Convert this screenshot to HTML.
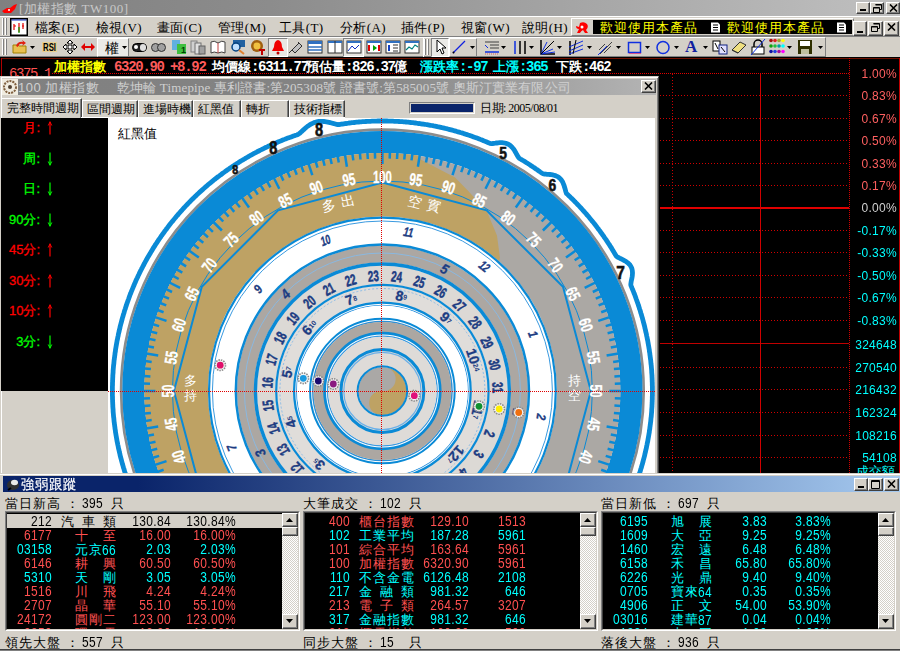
<!DOCTYPE html><html><head><meta charset="utf-8"><style>
*{margin:0;padding:0;box-sizing:border-box}
html,body{width:900px;height:651px;overflow:hidden;background:#d4d0c8;font-family:"Liberation Sans",sans-serif;font-size:12px;}
#root{position:relative;width:900px;height:651px;overflow:hidden}
.t{position:absolute;white-space:pre;line-height:1}
.m{font-family:"Liberation Mono",monospace}
.rb{border-top:1px solid #fff;border-left:1px solid #fff;border-right:1px solid #404040;border-bottom:1px solid #404040;box-shadow:inset -1px -1px 0 #808080;background:#d4d0c8}
.sk{border-top:1px solid #808080;border-left:1px solid #808080;border-right:1px solid #fff;border-bottom:1px solid #fff}
</style></head><body><div id="root"><div style="position:absolute;left:0px;top:0px;width:900px;height:16px;background:linear-gradient(to right,#808080 0%,#8c8c8c 30%,#c0c0c0 100%)"></div>
<svg style="position:absolute;left:1px;top:2px" width="17" height="13" viewBox="0 0 17 13"><path d="M1 9 L6 6 L9 6 L13 3 L16 2 L14 7 L10 11 L3 11 Z" fill="#ff0000"/><circle cx="8" cy="8" r="1" fill="#fff"/></svg>
<div class="t" style="left:19px;top:2px;color:#c8c8c8;font-size:13px;letter-spacing:0.5px;font-family:Liberation Serif,serif">[加權指數 TW100]</div>
<div class="rb" style="position:absolute;left:856px;top:2px;width:14px;height:12px"></div>
<div style="position:absolute;left:860px;top:9px;width:6px;height:2px;background:#000"></div>
<div class="rb" style="position:absolute;left:870px;top:2px;width:14px;height:12px"></div>
<svg style="position:absolute;left:873px;top:4px" width="9" height="9" viewBox="0 0 9 9"><path d="M2.5 0.5h6v5h-2M0.5 3.5h6v5h-6z M0.5 4h6 M2.5 1h6" fill="none" stroke="#000" stroke-width="1"/></svg>
<div class="rb" style="position:absolute;left:886px;top:2px;width:14px;height:12px"></div>
<svg style="position:absolute;left:889px;top:4px" width="9" height="8" viewBox="0 0 9 8"><path d="M1 0.5L8 7.5M8 0.5L1 7.5" stroke="#000" stroke-width="1.6"/></svg>
<div style="position:absolute;left:0px;top:16px;width:900px;height:21px;background:#d4d0c8;border-top:1px solid #fff;border-bottom:1px solid #808080"></div>
<div style="position:absolute;left:2px;top:18px;width:2px;height:17px;border-left:1px solid #fff;border-right:1px solid #808080"></div>
<div style="position:absolute;left:5px;top:18px;width:2px;height:17px;border-left:1px solid #fff;border-right:1px solid #808080"></div>
<svg style="position:absolute;left:10px;top:18px" width="18" height="18" viewBox="0 0 18 18"><rect x="0.75" y="0.75" width="16.5" height="16.5" fill="#fff" stroke="#000" stroke-width="1.5"/><rect x="1.5" y="1.5" width="15" height="1" fill="#1030c0"/><path d="M4 6v6M4 8h2M9 5v9M13 5v6M12 8h2" stroke="#e00000" stroke-width="1.2"/><path d="M9 9v6" stroke="#00a000" stroke-width="1.2"/></svg>
<div class="t" style="left:35px;top:21px;color:#000;font-size:13px;font-family:Liberation Serif,serif;letter-spacing:0.4px">檔案(E)</div>
<div class="t" style="left:96px;top:21px;color:#000;font-size:13px;font-family:Liberation Serif,serif;letter-spacing:0.4px">檢視(V)</div>
<div class="t" style="left:157px;top:21px;color:#000;font-size:13px;font-family:Liberation Serif,serif;letter-spacing:0.4px">畫面(C)</div>
<div class="t" style="left:218px;top:21px;color:#000;font-size:13px;font-family:Liberation Serif,serif;letter-spacing:0.4px">管理(M)</div>
<div class="t" style="left:279px;top:21px;color:#000;font-size:13px;font-family:Liberation Serif,serif;letter-spacing:0.4px">工具(T)</div>
<div class="t" style="left:340px;top:21px;color:#000;font-size:13px;font-family:Liberation Serif,serif;letter-spacing:0.4px">分析(A)</div>
<div class="t" style="left:401px;top:21px;color:#000;font-size:13px;font-family:Liberation Serif,serif;letter-spacing:0.4px">插件(P)</div>
<div class="t" style="left:461px;top:21px;color:#000;font-size:13px;font-family:Liberation Serif,serif;letter-spacing:0.4px">視窗(W)</div>
<div class="t" style="left:522px;top:21px;color:#000;font-size:13px;font-family:Liberation Serif,serif;letter-spacing:0.4px">說明(H)</div>
<div style="position:absolute;left:571px;top:18px;width:283px;height:18px;border-top:1px solid #fff;border-left:1px solid #fff;border-right:1px solid #808080;border-bottom:1px solid #808080"></div>
<svg style="position:absolute;left:575px;top:21px" width="15" height="13" viewBox="0 0 15 13"><path d="M5 2 Q9 0 12 3 Q14 6 11 9 L13 12 L10 12 L8 9 Q6 10 5 12 L2 12 L4 8 Q1 8 1 5 L4 6 Z" fill="#f00"/><circle cx="7" cy="6" r="1.5" fill="#fff"/></svg>
<div style="position:absolute;left:593px;top:20px;width:259px;height:14px;background:#000"></div>
<div class="t" style="left:600px;top:21px;color:#ffff00;font-size:13px;letter-spacing:1px">歡迎使用本產品</div>
<svg style="position:absolute;left:710px;top:22px" width="11" height="11" viewBox="0 0 11 11"><path d="M1 0.5h7l2 2v8h-9z" fill="#fff"/><path d="M3 3h5M3 5.5h5M3 8h5" stroke="#000" stroke-width="1"/></svg>
<div class="t" style="left:727px;top:21px;color:#ffff00;font-size:13px;letter-spacing:1px">歡迎使用本產品</div>
<svg style="position:absolute;left:836px;top:22px" width="11" height="11" viewBox="0 0 11 11"><path d="M1 0.5h7l2 2v8h-9z" fill="#fff"/><path d="M3 3h5M3 5.5h5M3 8h5" stroke="#000" stroke-width="1"/></svg>
<div class="rb" style="position:absolute;left:853px;top:21px;width:14px;height:15px"></div>
<div style="position:absolute;left:857px;top:31px;width:6px;height:2px;background:#000"></div>
<div class="rb" style="position:absolute;left:868px;top:21px;width:15px;height:15px"></div>
<svg style="position:absolute;left:871px;top:23px" width="9" height="9" viewBox="0 0 9 9"><path d="M2.5 0.5h6v5h-2M0.5 3.5h6v5h-6z M0.5 4h6 M2.5 1h6" fill="none" stroke="#000" stroke-width="1"/></svg>
<div class="rb" style="position:absolute;left:884px;top:21px;width:15px;height:15px"></div>
<svg style="position:absolute;left:887px;top:23px" width="9" height="8" viewBox="0 0 9 8"><path d="M1 0.5L8 7.5M8 0.5L1 7.5" stroke="#000" stroke-width="1.6"/></svg>
<div style="position:absolute;left:0px;top:37px;width:826px;height:20px;border-top:1px solid #fff;border-right:1px solid #808080;border-bottom:1px solid #808080"></div>
<div style="position:absolute;left:2px;top:39px;width:2px;height:16px;border-left:1px solid #fff;border-right:1px solid #808080"></div>
<div style="position:absolute;left:5px;top:39px;width:2px;height:16px;border-left:1px solid #fff;border-right:1px solid #808080"></div>
<svg style="position:absolute;left:12px;top:39px" width="16" height="16" viewBox="0 0 16 16"><path d="M1 6h5l1 1h7v7H1z" fill="#e8c050" stroke="#a08000"/><path d="M4 7 Q6 2 11 3 L10 1 L14 4 L10 7 L11 5 Q7 4 6 8z" fill="#e02010"/></svg>
<svg style="position:absolute;left:30px;top:46px" width="5" height="3" viewBox="0 0 5 3"><path d="M0 0h5L2.5 3z" fill="#000"/></svg>
<svg style="position:absolute;left:42px;top:39px" width="16" height="16" viewBox="0 0 16 16"><rect x="0" y="3" width="15" height="10" fill="#e8d090"/><text x="7.5" y="12" font-size="10" font-family="Liberation Sans" font-weight="bold" text-anchor="middle" fill="#000" textLength="13" lengthAdjust="spacingAndGlyphs">RSI</text></svg>
<svg style="position:absolute;left:62px;top:39px" width="16" height="16" viewBox="0 0 16 16"><path d="M8 1l3 3H9v3h3V5l3 3-3 3V9H9v3h2l-3 3-3-3h2V9H4v2L1 8l3-3v2h3V4H5z" fill="#fff" stroke="#000"/></svg>
<div style="position:absolute;left:80px;top:39px;width:16px;height:17px;background:#cfcbc7"></div>
<svg style="position:absolute;left:80px;top:39px" width="16" height="16" viewBox="0 0 16 16"><path d="M1 8l4-4v3h6V4l4 4-4 4V9H5v3z" fill="#e00000"/></svg>
<div style="position:absolute;left:97px;top:38px;width:32px;height:19px;background:#ebeae7;border-left:1px solid #fff;border-top:1px solid #fff;border-right:1px solid #808080;border-bottom:1px solid #808080"></div>
<div class="t" style="left:105px;top:41px;color:#000;font-size:14px">權</div>
<svg style="position:absolute;left:122px;top:46px" width="5" height="3" viewBox="0 0 5 3"><path d="M0 0h5L2.5 3z" fill="#000"/></svg>
<svg style="position:absolute;left:132px;top:39px" width="16" height="16" viewBox="0 0 16 16"><rect x="0.5" y="4.5" width="14" height="8" rx="4" fill="#202020" stroke="#000"/><rect x="8" y="5" width="6" height="7" rx="3" fill="#e0e0e0"/><circle cx="4" cy="8" r="2" fill="#fff"/></svg>
<svg style="position:absolute;left:151px;top:39px" width="16" height="16" viewBox="0 0 16 16"><circle cx="4.5" cy="8.5" r="4" fill="#a0a0a0" stroke="#303030"/><circle cx="10.5" cy="8.5" r="4" fill="#a0a0a0" stroke="#303030"/></svg>
<svg style="position:absolute;left:171px;top:39px" width="16" height="16" viewBox="0 0 16 16"><rect x="1" y="1" width="8" height="10" fill="#60b0e0"/><rect x="6" y="5" width="9" height="10" fill="#40c040"/><text x="10" y="14" font-size="9" font-weight="bold" fill="#004000" font-family="Liberation Sans">1</text></svg>
<svg style="position:absolute;left:190px;top:39px" width="16" height="16" viewBox="0 0 16 16"><rect x="1" y="2" width="6" height="11" fill="#d0d0d0" stroke="#808080"/><rect x="5" y="4" width="6" height="11" fill="#e0e0e0" stroke="#707070"/><rect x="9" y="7" width="6" height="8" fill="#a0a0a0" stroke="#606060"/></svg>
<svg style="position:absolute;left:210px;top:39px" width="16" height="16" viewBox="0 0 16 16"><path d="M1 3 Q4 1 8 4 Q12 1 15 3 V14 Q12 12 8 14 Q4 12 1 14z" fill="#fff" stroke="#404040"/><path d="M8 4v10" stroke="#c04040"/></svg>
<svg style="position:absolute;left:230px;top:39px" width="16" height="16" viewBox="0 0 16 16"><rect x="3" y="1" width="12" height="7" fill="#2060a0"/><circle cx="6" cy="8" r="4" fill="#c0e0ff" stroke="#004080" stroke-width="1.5"/><path d="M9 11l5 4" stroke="#e08030" stroke-width="2"/></svg>
<svg style="position:absolute;left:250px;top:39px" width="16" height="16" viewBox="0 0 16 16"><circle cx="7" cy="7" r="6" fill="#a06010"/><circle cx="7" cy="7" r="3.5" fill="#f0c040"/><path d="M9 11h6M12 11v5" stroke="#c00000" stroke-width="2"/></svg>
<div style="position:absolute;left:268px;top:38px;width:20px;height:19px;background:#e8e6e2;border-left:1px solid #808080;border-top:1px solid #808080;border-right:1px solid #fff;border-bottom:1px solid #fff"></div>
<svg style="position:absolute;left:270px;top:39px" width="16" height="16" viewBox="0 0 16 16"><path d="M8 1 Q12 2 12 8 L14 12 H2 L4 8 Q4 2 8 1z" fill="#f00000"/><circle cx="8" cy="14" r="1.5" fill="#c00000"/></svg>
<svg style="position:absolute;left:287px;top:39px" width="16" height="16" viewBox="0 0 16 16"><path d="M2 14l3-3M5 11l7-7 3 3-7 7z M11 3l2 2" fill="#c0c0c0" stroke="#303030"/></svg>
<svg style="position:absolute;left:307px;top:39px" width="16" height="16" viewBox="0 0 16 16"><rect x="1" y="2" width="14" height="12" fill="#fff" stroke="#303030"/><rect x="1" y="2" width="14" height="3" fill="#3070c0"/><path d="M1 8h14M1 11h14" stroke="#3070c0" stroke-width="1.5"/></svg>
<svg style="position:absolute;left:327px;top:39px" width="16" height="16" viewBox="0 0 16 16"><rect x="1" y="2" width="14" height="12" fill="#fff" stroke="#303030"/><rect x="1" y="2" width="14" height="2" fill="#3070c0"/><path d="M8 2v12" stroke="#303030"/></svg>
<div style="position:absolute;left:343px;top:38px;width:21px;height:19px;background:#e8e6e2;border-left:1px solid #808080;border-top:1px solid #808080;border-right:1px solid #fff;border-bottom:1px solid #fff"></div>
<svg style="position:absolute;left:346px;top:39px" width="16" height="16" viewBox="0 0 16 16"><rect x="1" y="2" width="14" height="12" fill="#fff" stroke="#303030"/><rect x="1" y="2" width="14" height="2" fill="#3070c0"/><path d="M2 12l4-5 3 3 4-4" stroke="#1030c0" fill="none"/></svg>
<svg style="position:absolute;left:366px;top:39px" width="16" height="16" viewBox="0 0 16 16"><rect x="1" y="2" width="14" height="12" fill="#fff" stroke="#303030"/><rect x="1" y="2" width="14" height="2" fill="#3070c0"/><path d="M3 6v6M13 6v6" stroke="#e00000" stroke-width="2"/><path d="M7 6l4 3-4 3z" fill="#00a000"/></svg>
<svg style="position:absolute;left:385px;top:39px" width="16" height="16" viewBox="0 0 16 16"><rect x="1" y="2" width="14" height="12" fill="#fff" stroke="#303030"/><rect x="1" y="2" width="14" height="2" fill="#3070c0"/><path d="M4 6v6" stroke="#1040c0" stroke-width="2"/><path d="M8 6h5M8 9h5M8 12h5" stroke="#303030"/></svg>
<svg style="position:absolute;left:404px;top:39px" width="16" height="16" viewBox="0 0 16 16"><rect x="1" y="2" width="14" height="12" fill="#fff" stroke="#303030"/><rect x="1" y="2" width="14" height="2" fill="#3070c0"/><path d="M2 11l3-3 3 2 3-4 3 2" stroke="#008080" fill="none" stroke-width="1.2"/></svg>
<div style="position:absolute;left:423px;top:37px;width:403px;height:20px;border-left:1px solid #fff"></div>
<div style="position:absolute;left:424px;top:39px;width:2px;height:16px;border-left:1px solid #fff;border-right:1px solid #808080"></div>
<div style="position:absolute;left:427px;top:39px;width:2px;height:16px;border-left:1px solid #fff;border-right:1px solid #808080"></div>
<div style="position:absolute;left:431px;top:38px;width:18px;height:19px;background:#ebeae7;border-left:1px solid #808080;border-top:1px solid #808080;border-right:1px solid #fff;border-bottom:1px solid #fff"></div>
<svg style="position:absolute;left:434px;top:39px" width="16" height="16" viewBox="0 0 16 16"><path d="M3 1v12l3-3 2 5 2-1-2-5h4z" fill="#fff" stroke="#000"/></svg>
<div style="position:absolute;left:449px;top:38px;width:28px;height:19px;border-left:1px solid #fff;border-top:1px solid #fff;border-right:1px solid #808080;border-bottom:1px solid #808080"></div>
<svg style="position:absolute;left:451px;top:39px" width="16" height="16" viewBox="0 0 16 16"><path d="M2 14L14 2" stroke="#1020e0" stroke-width="1.2"/><circle cx="2.5" cy="13.5" r="1" fill="#000"/></svg>
<svg style="position:absolute;left:470px;top:46px" width="5" height="3" viewBox="0 0 5 3"><path d="M0 0h5L2.5 3z" fill="#000"/></svg>
<svg style="position:absolute;left:484px;top:39px" width="16" height="16" viewBox="0 0 16 16"><path d="M1 3h14M6 6h9M6 9h9" stroke="#404040"/><path d="M1 6l3 3" stroke="#1030e0"/><path d="M1 13h14" stroke="#1030e0" stroke-width="1.5"/><path d="M1 15h14" stroke="#e04040" stroke-width="0.8" stroke-dasharray="1 1"/></svg>
<svg style="position:absolute;left:501px;top:46px" width="5" height="3" viewBox="0 0 5 3"><path d="M0 0h5L2.5 3z" fill="#000"/></svg>
<svg style="position:absolute;left:512px;top:39px" width="16" height="16" viewBox="0 0 16 16"><path d="M3 2v13" stroke="#1030e0" stroke-width="1.5"/><path d="M8 2v13M13 2v13" stroke="#000" stroke-width="1.5"/></svg>
<svg style="position:absolute;left:529px;top:46px" width="5" height="3" viewBox="0 0 5 3"><path d="M0 0h5L2.5 3z" fill="#000"/></svg>
<svg style="position:absolute;left:540px;top:39px" width="16" height="16" viewBox="0 0 16 16"><path d="M1 1v14h14" stroke="#000" stroke-width="1.5" fill="none"/><path d="M1 15L7 3M1 15L10 6M1 15L13 10M1 15L15 13" stroke="#1030e0"/><path d="M1 15L14 2" stroke="#000"/></svg>
<svg style="position:absolute;left:557px;top:46px" width="5" height="3" viewBox="0 0 5 3"><path d="M0 0h5L2.5 3z" fill="#000"/></svg>
<svg style="position:absolute;left:568px;top:39px" width="16" height="16" viewBox="0 0 16 16"><path d="M2 2v14" stroke="#000" stroke-width="1.5"/><path d="M1 8L15 2M1 12L15 6M1 15L15 10" stroke="#1030e0"/><path d="M8 1L5 15" stroke="#000"/></svg>
<svg style="position:absolute;left:587px;top:46px" width="5" height="3" viewBox="0 0 5 3"><path d="M0 0h5L2.5 3z" fill="#000"/></svg>
<svg style="position:absolute;left:597px;top:39px" width="16" height="16" viewBox="0 0 16 16"><path d="M3 15L15 3M5 13l7-7M7 14l7-7M2 11l6-6" stroke="#404040"/><path d="M1 16L10 7" stroke="#1030e0"/></svg>
<svg style="position:absolute;left:616px;top:46px" width="5" height="3" viewBox="0 0 5 3"><path d="M0 0h5L2.5 3z" fill="#000"/></svg>
<svg style="position:absolute;left:627px;top:39px" width="16" height="16" viewBox="0 0 16 16"><rect x="1.5" y="3.5" width="12" height="10" fill="none" stroke="#1030e0" stroke-width="1.5"/><path d="M2 14.5h12" stroke="#e04080" stroke-width="0.8"/></svg>
<svg style="position:absolute;left:645px;top:46px" width="5" height="3" viewBox="0 0 5 3"><path d="M0 0h5L2.5 3z" fill="#000"/></svg>
<svg style="position:absolute;left:655px;top:39px" width="16" height="16" viewBox="0 0 16 16"><circle cx="8" cy="8.5" r="6" fill="none" stroke="#1030e0" stroke-width="1.5"/></svg>
<svg style="position:absolute;left:674px;top:46px" width="5" height="3" viewBox="0 0 5 3"><path d="M0 0h5L2.5 3z" fill="#000"/></svg>
<div class="t" style="left:685px;top:38px;color:#1020a0;font-size:17px;font-weight:bold;font-family:Liberation Serif,serif">A</div>
<svg style="position:absolute;left:703px;top:46px" width="5" height="3" viewBox="0 0 5 3"><path d="M0 0h5L2.5 3z" fill="#000"/></svg>
<svg style="position:absolute;left:712px;top:39px" width="16" height="16" viewBox="0 0 16 16"><rect x="1" y="2" width="7" height="10" fill="#fff" stroke="#000"/><rect x="7" y="6" width="8" height="9" fill="#e0e0ff" stroke="#102080"/><path d="M3 4l3 6M9 8l4 5" stroke="#000"/></svg>
<svg style="position:absolute;left:731px;top:39px" width="16" height="16" viewBox="0 0 16 16"><path d="M1 11l8-8 6 3-8 8z" fill="#f0e080" stroke="#303030"/><path d="M1 11l6 3" stroke="#303030"/></svg>
<svg style="position:absolute;left:750px;top:39px" width="16" height="16" viewBox="0 0 16 16"><path d="M4 8V5a4 4 0 0 1 8 0v3" fill="none" stroke="#000" stroke-width="1.5"/><rect x="2" y="8" width="12" height="7" fill="#fff" stroke="#000"/><path d="M1 16L15 0" stroke="#1030e0"/></svg>
<svg style="position:absolute;left:769px;top:38px" width="16" height="17" viewBox="0 0 16 17"><circle cx="2" cy="2.5" r="1.8" fill="#a01010"/><circle cx="6" cy="2.5" r="1.8" fill="#e02020"/><circle cx="10" cy="2.5" r="1.8" fill="#a0a030"/><circle cx="14" cy="2.5" r="1.8" fill="#ffff00"/><circle cx="2" cy="8.0" r="1.8" fill="#10a010"/><circle cx="6" cy="8.0" r="1.8" fill="#20c040"/><circle cx="10" cy="8.0" r="1.8" fill="#00a0a0"/><circle cx="14" cy="8.0" r="1.8" fill="#00ffff"/><circle cx="2" cy="13.5" r="1.8" fill="#1010a0"/><circle cx="6" cy="13.5" r="1.8" fill="#2040e0"/><circle cx="10" cy="13.5" r="1.8" fill="#a010a0"/><circle cx="14" cy="13.5" r="1.8" fill="#ff00ff"/></svg>
<svg style="position:absolute;left:787px;top:46px" width="5" height="3" viewBox="0 0 5 3"><path d="M0 0h5L2.5 3z" fill="#000"/></svg>
<svg style="position:absolute;left:797px;top:39px" width="16" height="16" viewBox="0 0 16 16"><rect x="1" y="1" width="14" height="14" fill="#303000"/><rect x="3" y="2" width="10" height="5" fill="#fff"/><rect x="4" y="10" width="8" height="5" fill="#c0c0a0"/></svg>
<svg style="position:absolute;left:818px;top:46px" width="5" height="3" viewBox="0 0 5 3"><path d="M0 0h5L2.5 3z" fill="#000"/></svg>
<div style="position:absolute;left:0px;top:57px;width:900px;height:416px;background:#000"></div>
<div style="position:absolute;left:1px;top:58px;width:899px;height:1px;background:#701000"></div>
<div style="position:absolute;left:1px;top:58px;width:1px;height:415px;background:#b00000"></div>
<div style="position:absolute;left:899px;top:58px;width:1px;height:415px;background:#c00000"></div>
<div class="t" style="left:9px;top:67px;color:#ff5050;font-size:14px;font-family:Liberation Mono,monospace;letter-spacing:-1.4px">6375.1</div>
<div class="t" style="left:54px;top:60px;color:#ffff00;font-size:13px;font-weight:bold">加權指數</div>
<div class="t" style="left:114px;top:60px;color:#ff5a5a;font-size:14px;font-family:Liberation Mono,monospace;letter-spacing:-1.3px;font-weight:bold">6320.90</div>
<div class="t" style="left:170px;top:60px;color:#ff5a5a;font-size:14px;font-family:Liberation Mono,monospace;letter-spacing:-1.3px;font-weight:bold">+8.92</div>
<div class="t" style="left:212px;top:60px;color:#fff;font-size:13px;font-weight:bold">均價線</div>
<div class="t" style="left:251px;top:60px;color:#fff;font-size:14px;font-family:Liberation Mono,monospace;letter-spacing:-1.3px;font-weight:bold">:6311.77</div>
<div class="t" style="left:306px;top:60px;color:#fff;font-size:13px;font-weight:bold">預估量</div>
<div class="t" style="left:345px;top:60px;color:#fff;font-size:14px;font-family:Liberation Mono,monospace;letter-spacing:-1.3px;font-weight:bold">:826.37</div>
<div class="t" style="left:394px;top:60px;color:#fff;font-size:13px;font-weight:bold">億</div>
<div class="t" style="left:420px;top:60px;color:#00ffff;font-size:13px;font-weight:bold">漲跌率</div>
<div class="t" style="left:459px;top:60px;color:#00ffff;font-size:14px;font-family:Liberation Mono,monospace;letter-spacing:-1.3px;font-weight:bold">:-97</div>
<div class="t" style="left:493px;top:60px;color:#00ffff;font-size:13px;font-weight:bold">上漲</div>
<div class="t" style="left:519px;top:60px;color:#00ffff;font-size:14px;font-family:Liberation Mono,monospace;letter-spacing:-1.3px;font-weight:bold">:365</div>
<div class="t" style="left:556px;top:60px;color:#fff;font-size:13px;font-weight:bold">下跌</div>
<div class="t" style="left:582px;top:60px;color:#fff;font-size:14px;font-family:Liberation Mono,monospace;letter-spacing:-1.3px;font-weight:bold">:462</div>
<div style="position:absolute;left:52px;top:73px;width:797px;height:1px;background:repeating-linear-gradient(to right,#e00000 0 1px,transparent 1px 2px)"></div>
<div style="position:absolute;left:660px;top:95px;width:189px;height:1px;background:repeating-linear-gradient(to right,#d00000 0 1px,transparent 1px 3px)"></div>
<div style="position:absolute;left:660px;top:118px;width:189px;height:1px;background:repeating-linear-gradient(to right,#d00000 0 1px,transparent 1px 3px)"></div>
<div style="position:absolute;left:660px;top:140px;width:189px;height:1px;background:repeating-linear-gradient(to right,#d00000 0 1px,transparent 1px 3px)"></div>
<div style="position:absolute;left:660px;top:163px;width:189px;height:1px;background:repeating-linear-gradient(to right,#d00000 0 1px,transparent 1px 3px)"></div>
<div style="position:absolute;left:660px;top:185px;width:189px;height:1px;background:repeating-linear-gradient(to right,#d00000 0 1px,transparent 1px 3px)"></div>
<div style="position:absolute;left:660px;top:230px;width:189px;height:1px;background:repeating-linear-gradient(to right,#d00000 0 1px,transparent 1px 3px)"></div>
<div style="position:absolute;left:660px;top:252px;width:189px;height:1px;background:repeating-linear-gradient(to right,#d00000 0 1px,transparent 1px 3px)"></div>
<div style="position:absolute;left:660px;top:275px;width:189px;height:1px;background:repeating-linear-gradient(to right,#d00000 0 1px,transparent 1px 3px)"></div>
<div style="position:absolute;left:660px;top:297px;width:189px;height:1px;background:repeating-linear-gradient(to right,#d00000 0 1px,transparent 1px 3px)"></div>
<div style="position:absolute;left:660px;top:320px;width:189px;height:1px;background:repeating-linear-gradient(to right,#d00000 0 1px,transparent 1px 3px)"></div>
<div style="position:absolute;left:660px;top:367px;width:189px;height:1px;background:repeating-linear-gradient(to right,#d00000 0 1px,transparent 1px 3px)"></div>
<div style="position:absolute;left:660px;top:389px;width:189px;height:1px;background:repeating-linear-gradient(to right,#d00000 0 1px,transparent 1px 3px)"></div>
<div style="position:absolute;left:660px;top:412px;width:189px;height:1px;background:repeating-linear-gradient(to right,#d00000 0 1px,transparent 1px 3px)"></div>
<div style="position:absolute;left:660px;top:435px;width:189px;height:1px;background:repeating-linear-gradient(to right,#d00000 0 1px,transparent 1px 3px)"></div>
<div style="position:absolute;left:660px;top:457px;width:189px;height:1px;background:repeating-linear-gradient(to right,#d00000 0 1px,transparent 1px 3px)"></div>
<div style="position:absolute;left:660px;top:207px;width:189px;height:2px;background:#e00000"></div>
<div style="position:absolute;left:660px;top:343px;width:189px;height:1px;background:#c00000"></div>
<div style="position:absolute;left:672px;top:74px;width:1px;height:399px;background:repeating-linear-gradient(to bottom,#d00000 0 1px,transparent 1px 3px)"></div>
<div style="position:absolute;left:760px;top:74px;width:1px;height:399px;background:#d00000"></div>
<div style="position:absolute;left:849px;top:58px;width:1px;height:415px;background:repeating-linear-gradient(to bottom,#d00000 0 1px,transparent 1px 2px)"></div>
<div class="t" style="right:3px;top:68px;color:#ff6060;font-size:12px;font-family:Liberation Sans,sans-serif;letter-spacing:0.3px;transform:scaleY(1.05)">1.00%</div>
<div class="t" style="right:3px;top:90px;color:#ff6060;font-size:12px;font-family:Liberation Sans,sans-serif;letter-spacing:0.3px;transform:scaleY(1.05)">0.83%</div>
<div class="t" style="right:3px;top:113px;color:#ff6060;font-size:12px;font-family:Liberation Sans,sans-serif;letter-spacing:0.3px;transform:scaleY(1.05)">0.67%</div>
<div class="t" style="right:3px;top:135px;color:#ff6060;font-size:12px;font-family:Liberation Sans,sans-serif;letter-spacing:0.3px;transform:scaleY(1.05)">0.50%</div>
<div class="t" style="right:3px;top:158px;color:#ff6060;font-size:12px;font-family:Liberation Sans,sans-serif;letter-spacing:0.3px;transform:scaleY(1.05)">0.33%</div>
<div class="t" style="right:3px;top:180px;color:#ff6060;font-size:12px;font-family:Liberation Sans,sans-serif;letter-spacing:0.3px;transform:scaleY(1.05)">0.17%</div>
<div class="t" style="right:3px;top:202px;color:#d0d0d0;font-size:12px;font-family:Liberation Sans,sans-serif;letter-spacing:0.3px;transform:scaleY(1.05)">0.00%</div>
<div class="t" style="right:3px;top:225px;color:#00ffff;font-size:12px;font-family:Liberation Sans,sans-serif;letter-spacing:0.3px;transform:scaleY(1.05)">-0.17%</div>
<div class="t" style="right:3px;top:247px;color:#00ffff;font-size:12px;font-family:Liberation Sans,sans-serif;letter-spacing:0.3px;transform:scaleY(1.05)">-0.33%</div>
<div class="t" style="right:3px;top:270px;color:#00ffff;font-size:12px;font-family:Liberation Sans,sans-serif;letter-spacing:0.3px;transform:scaleY(1.05)">-0.50%</div>
<div class="t" style="right:3px;top:292px;color:#00ffff;font-size:12px;font-family:Liberation Sans,sans-serif;letter-spacing:0.3px;transform:scaleY(1.05)">-0.67%</div>
<div class="t" style="right:3px;top:315px;color:#00ffff;font-size:12px;font-family:Liberation Sans,sans-serif;letter-spacing:0.3px;transform:scaleY(1.05)">-0.83%</div>
<div class="t" style="right:3px;top:339px;color:#00ffff;font-size:12px;font-family:Liberation Sans,sans-serif;letter-spacing:0.3px;transform:scaleY(1.05)">324648</div>
<div class="t" style="right:3px;top:362px;color:#00ffff;font-size:12px;font-family:Liberation Sans,sans-serif;letter-spacing:0.3px;transform:scaleY(1.05)">270540</div>
<div class="t" style="right:3px;top:384px;color:#00ffff;font-size:12px;font-family:Liberation Sans,sans-serif;letter-spacing:0.3px;transform:scaleY(1.05)">216432</div>
<div class="t" style="right:3px;top:407px;color:#00ffff;font-size:12px;font-family:Liberation Sans,sans-serif;letter-spacing:0.3px;transform:scaleY(1.05)">162324</div>
<div class="t" style="right:3px;top:430px;color:#00ffff;font-size:12px;font-family:Liberation Sans,sans-serif;letter-spacing:0.3px;transform:scaleY(1.05)">108216</div>
<div class="t" style="right:3px;top:452px;color:#00ffff;font-size:12px;font-family:Liberation Sans,sans-serif;letter-spacing:0.3px;transform:scaleY(1.05)">54108</div>
<div class="t" style="left:856px;top:466px;color:#00ffff;font-size:12.5px">成交額</div>
<div style="position:absolute;left:0px;top:76px;width:659px;height:397px;background:#d4d0c8;border-top:1px solid #d4d0c8;border-left:1px solid #d4d0c8;border-right:1px solid #404040;box-shadow:inset 1px 1px 0 #fff,inset -1px 0 0 #808080"></div>
<div style="position:absolute;left:2px;top:79px;width:654px;height:16px;background:linear-gradient(to right,#808080 0%,#848484 55%,#b4b4b4 100%)"></div>
<svg style="position:absolute;left:2px;top:79px" width="16" height="16" viewBox="0 0 16 16"><rect width="16" height="16" fill="#f0ece0"/><circle cx="8" cy="8" r="6" fill="none" stroke="#806040" stroke-width="2" stroke-dasharray="2 1"/><circle cx="8" cy="8" r="2" fill="#504030"/></svg>
<div class="t" style="left:18px;top:81px;color:#d0d0d0;font-size:13px;letter-spacing:0.5px">100 加權指數</div>
<div class="t" style="left:117px;top:81px;color:#d0d0d0;font-size:13px;font-family:Liberation Serif,serif;letter-spacing:0.15px">乾坤輪 Timepipe 專利證書:第205308號 證書號:第585005號 奧斯汀實業有限公司</div>
<div class="rb" style="position:absolute;left:641px;top:80px;width:15px;height:13px"></div>
<svg style="position:absolute;left:644px;top:82px" width="9" height="8" viewBox="0 0 9 8"><path d="M1 0.5L8 7.5M8 0.5L1 7.5" stroke="#000" stroke-width="1.6"/></svg>
<div style="position:absolute;left:1px;top:98px;width:81px;height:20px;background:#d4d0c8;border-top:1px solid #fff;border-left:1px solid #fff;border-right:1px solid #404040;box-shadow:inset -1px 0 0 #808080"></div>
<div class="t" style="left:7px;top:102px;color:#000;font-size:12px">完整時間週期</div>
<div style="position:absolute;left:82px;top:100px;width:56px;height:17px;background:#d4d0c8;border-top:1px solid #fff;border-left:1px solid #fff;border-right:1px solid #404040;box-shadow:inset -1px 0 0 #808080"></div>
<div class="t" style="left:87px;top:103px;color:#000;font-size:12px">區間週期</div>
<div style="position:absolute;left:138px;top:100px;width:55px;height:17px;background:#d4d0c8;border-top:1px solid #fff;border-left:1px solid #fff;border-right:1px solid #404040;box-shadow:inset -1px 0 0 #808080"></div>
<div class="t" style="left:143px;top:103px;color:#000;font-size:12px">進場時機</div>
<div style="position:absolute;left:193px;top:100px;width:48px;height:17px;background:#d4d0c8;border-top:1px solid #fff;border-left:1px solid #fff;border-right:1px solid #404040;box-shadow:inset -1px 0 0 #808080"></div>
<div class="t" style="left:198px;top:103px;color:#000;font-size:12px">紅黑值</div>
<div style="position:absolute;left:241px;top:100px;width:48px;height:17px;background:#d4d0c8;border-top:1px solid #fff;border-left:1px solid #fff;border-right:1px solid #404040;box-shadow:inset -1px 0 0 #808080"></div>
<div class="t" style="left:246px;top:103px;color:#000;font-size:12px">轉折</div>
<div style="position:absolute;left:289px;top:100px;width:56px;height:17px;background:#d4d0c8;border-top:1px solid #fff;border-left:1px solid #fff;border-right:1px solid #404040;box-shadow:inset -1px 0 0 #808080"></div>
<div class="t" style="left:294px;top:103px;color:#000;font-size:12px">技術指標</div>
<div style="position:absolute;left:81px;top:117px;width:264px;height:1px;background:#fff"></div>
<div style="position:absolute;left:409px;top:102px;width:66px;height:12px;border-top:1px solid #808080;border-left:1px solid #808080;border-right:1px solid #fff;border-bottom:1px solid #fff"></div>
<div style="position:absolute;left:411px;top:104px;width:62px;height:8px;background:#0a246a"></div>
<div class="t" style="left:480px;top:102px;color:#000;font-size:12px;font-family:Liberation Serif,serif;letter-spacing:-0.5px">日期: 2005/08/01</div>
<div style="position:absolute;left:1px;top:118px;width:107px;height:273px;background:#000"></div>
<div class="t" style="right:860px;top:121.0px;color:#ff0000;font-size:13px;-webkit-text-stroke:0.3px #ff0000">月:</div>
<svg style="position:absolute;left:47px;top:121.0px" width="6" height="14" viewBox="0 0 6 14"><path d="M3 0.5V13.5" stroke="#ff0000" stroke-width="1.2"/><path d="M3 1L1.2 4.5M3 1L4.8 4.5" stroke="#ff0000" stroke-width="1"/></svg>
<div class="t" style="right:860px;top:151.5px;color:#00ff00;font-size:13px;-webkit-text-stroke:0.3px #00ff00">周:</div>
<svg style="position:absolute;left:47px;top:151.5px" width="6" height="14" viewBox="0 0 6 14"><path d="M3 0.5V13.5" stroke="#00ff00" stroke-width="1.2"/><path d="M3 13L1.2 9.5M3 13L4.8 9.5" stroke="#00ff00" stroke-width="1"/></svg>
<div class="t" style="right:860px;top:182.0px;color:#00ff00;font-size:13px;-webkit-text-stroke:0.3px #00ff00">日:</div>
<svg style="position:absolute;left:47px;top:182.0px" width="6" height="14" viewBox="0 0 6 14"><path d="M3 0.5V13.5" stroke="#00ff00" stroke-width="1.2"/><path d="M3 13L1.2 9.5M3 13L4.8 9.5" stroke="#00ff00" stroke-width="1"/></svg>
<div class="t" style="right:860px;top:212.5px;color:#00ff00;font-size:13px;-webkit-text-stroke:0.3px #00ff00">90分:</div>
<svg style="position:absolute;left:47px;top:212.5px" width="6" height="14" viewBox="0 0 6 14"><path d="M3 0.5V13.5" stroke="#00ff00" stroke-width="1.2"/><path d="M3 13L1.2 9.5M3 13L4.8 9.5" stroke="#00ff00" stroke-width="1"/></svg>
<div class="t" style="right:860px;top:243.0px;color:#ff0000;font-size:13px;-webkit-text-stroke:0.3px #ff0000">45分:</div>
<svg style="position:absolute;left:47px;top:243.0px" width="6" height="14" viewBox="0 0 6 14"><path d="M3 0.5V13.5" stroke="#ff0000" stroke-width="1.2"/><path d="M3 1L1.2 4.5M3 1L4.8 4.5" stroke="#ff0000" stroke-width="1"/></svg>
<div class="t" style="right:860px;top:273.5px;color:#ff0000;font-size:13px;-webkit-text-stroke:0.3px #ff0000">30分:</div>
<svg style="position:absolute;left:47px;top:273.5px" width="6" height="14" viewBox="0 0 6 14"><path d="M3 0.5V13.5" stroke="#ff0000" stroke-width="1.2"/><path d="M3 1L1.2 4.5M3 1L4.8 4.5" stroke="#ff0000" stroke-width="1"/></svg>
<div class="t" style="right:860px;top:304.0px;color:#ff0000;font-size:13px;-webkit-text-stroke:0.3px #ff0000">10分:</div>
<svg style="position:absolute;left:47px;top:304.0px" width="6" height="14" viewBox="0 0 6 14"><path d="M3 0.5V13.5" stroke="#ff0000" stroke-width="1.2"/><path d="M3 1L1.2 4.5M3 1L4.8 4.5" stroke="#ff0000" stroke-width="1"/></svg>
<div class="t" style="right:860px;top:334.5px;color:#00ff00;font-size:13px;-webkit-text-stroke:0.3px #00ff00">3分:</div>
<svg style="position:absolute;left:47px;top:334.5px" width="6" height="14" viewBox="0 0 6 14"><path d="M3 0.5V13.5" stroke="#00ff00" stroke-width="1.2"/><path d="M3 13L1.2 9.5M3 13L4.8 9.5" stroke="#00ff00" stroke-width="1"/></svg>
<div style="position:absolute;left:108px;top:118px;width:547px;height:355px;background:#fff;overflow:hidden"></div>
<svg style="position:absolute;left:0;top:0" width="900" height="651" viewBox="0 0 900 651"><defs><clipPath id="wc"><rect x="108" y="118" width="547" height="355"/></clipPath><mask id="ringmask"><rect x="0" y="0" width="900" height="651" fill="#000"/><circle cx="382.4" cy="391.0" r="206" fill="none" stroke="#fff" stroke-width="64"/></mask></defs><g clip-path="url(#wc)"><path d="M382.4,661.0 L381.2,661.0 L380.0,661.0 L378.9,661.0 L377.7,661.0 L376.5,660.9 L375.3,660.9 L374.2,660.9 L373.0,660.8 L371.8,660.8 L370.6,660.7 L369.4,660.7 L368.3,660.6 L367.1,660.6 L365.9,660.5 L364.7,660.4 L363.6,660.3 L362.4,660.3 L361.2,660.2 L360.0,660.1 L358.9,660.0 L357.7,659.9 L356.5,659.8 L355.3,659.6 L354.2,659.5 L353.0,659.4 L351.8,659.3 L350.7,659.1 L349.5,659.0 L348.3,658.8 L347.2,658.7 L346.0,658.5 L344.8,658.4 L343.7,658.2 L342.5,658.0 L341.3,657.9 L340.2,657.7 L339.0,657.5 L337.8,657.3 L336.7,657.1 L335.5,656.9 L334.4,656.7 L333.2,656.5 L332.0,656.3 L330.9,656.0 L329.7,655.8 L328.6,655.6 L327.4,655.3 L326.3,655.1 L325.1,654.9 L324.0,654.6 L322.8,654.3 L321.7,654.1 L320.5,653.8 L319.4,653.5 L318.2,653.3 L317.1,653.0 L315.9,652.7 L314.8,652.4 L313.7,652.1 L312.5,651.8 L311.4,651.5 L310.2,651.2 L309.1,650.9 L308.0,650.5 L306.8,650.2 L305.7,649.9 L304.6,649.5 L303.5,649.2 L302.3,648.9 L301.2,648.5 L300.1,648.1 L299.0,647.8 L297.8,647.4 L296.7,647.0 L295.6,646.7 L294.5,646.3 L293.4,645.9 L292.3,645.5 L291.2,645.1 L290.1,644.7 L288.9,644.3 L287.8,643.9 L286.7,643.5 L285.6,643.1 L284.5,642.6 L283.4,642.2 L282.3,641.8 L281.3,641.3 L280.2,640.9 L279.1,640.4 L278.0,640.0 L276.9,639.5 L275.8,639.1 L274.7,638.6 L273.7,638.1 L272.6,637.7 L271.5,637.2 L270.4,636.7 L269.4,636.2 L268.3,635.7 L267.2,635.2 L266.2,634.7 L265.1,634.2 L264.0,633.7 L263.0,633.2 L261.9,632.6 L260.9,632.1 L259.8,631.6 L258.8,631.0 L257.7,630.5 L256.7,629.9 L255.6,629.4 L254.6,628.8 L253.6,628.3 L252.5,627.7 L251.5,627.1 L250.5,626.6 L249.4,626.0 L248.4,625.4 L247.4,624.8 L246.4,624.2 L245.4,623.6 L244.4,623.0 L243.3,622.4 L242.3,621.8 L241.3,621.2 L240.3,620.6 L239.3,620.0 L238.3,619.3 L237.3,618.7 L236.3,618.1 L235.3,617.4 L234.4,616.8 L233.4,616.1 L232.4,615.5 L231.4,614.8 L230.4,614.2 L229.5,613.5 L228.5,612.8 L227.5,612.2 L226.6,611.5 L225.6,610.8 L224.7,610.1 L223.7,609.4 L222.7,608.7 L221.8,608.0 L220.9,607.3 L219.9,606.6 L219.0,605.9 L218.0,605.2 L217.1,604.5 L216.2,603.8 L215.2,603.0 L214.3,602.3 L213.4,601.6 L212.5,600.8 L211.6,600.1 L210.7,599.3 L209.8,598.6 L208.8,597.8 L207.9,597.1 L207.0,596.3 L206.2,595.5 L205.3,594.8 L204.4,594.0 L203.5,593.2 L202.6,592.4 L201.7,591.6 L200.9,590.9 L200.0,590.1 L199.1,589.3 L198.3,588.5 L197.4,587.7 L196.5,586.9 L195.7,586.0 L194.8,585.2 L194.0,584.4 L193.2,583.6 L192.3,582.8 L191.5,581.9 L190.6,581.1 L189.8,580.2 L189.0,579.4 L188.2,578.6 L187.4,577.7 L186.5,576.9 L185.7,576.0 L184.9,575.1 L184.1,574.3 L183.3,573.4 L182.5,572.5 L181.8,571.7 L181.0,570.8 L180.2,569.9 L179.4,569.0 L178.6,568.1 L177.9,567.2 L177.1,566.4 L176.3,565.5 L175.6,564.6 L174.8,563.6 L174.1,562.7 L173.3,561.8 L172.6,560.9 L171.8,560.0 L171.1,559.1 L170.4,558.2 L169.6,557.2 L168.9,556.3 L168.2,555.4 L167.5,554.4 L166.8,553.5 L166.1,552.5 L165.4,551.6 L164.7,550.7 L164.0,549.7 L163.3,548.7 L162.6,547.8 L161.9,546.8 L161.2,545.9 L160.6,544.9 L159.9,543.9 L159.2,543.0 L158.6,542.0 L157.9,541.0 L157.3,540.0 L156.6,539.0 L156.0,538.1 L155.3,537.1 L154.7,536.1 L154.1,535.1 L153.4,534.1 L152.8,533.1 L152.2,532.1 L151.6,531.1 L151.0,530.1 L150.4,529.0 L149.8,528.0 L149.2,527.0 L148.6,526.0 L148.0,525.0 L147.4,524.0 L146.8,522.9 L146.3,521.9 L145.7,520.9 L145.1,519.8 L144.6,518.8 L144.0,517.8 L143.5,516.7 L142.9,515.7 L142.4,514.6 L141.8,513.6 L141.3,512.5 L140.8,511.5 L140.2,510.4 L139.7,509.4 L139.2,508.3 L138.7,507.2 L138.2,506.2 L137.7,505.1 L137.2,504.0 L136.7,503.0 L136.2,501.9 L135.7,500.8 L135.3,499.7 L134.8,498.7 L134.3,497.6 L133.9,496.5 L133.4,495.4 L133.0,494.3 L132.5,493.2 L132.1,492.1 L131.6,491.1 L131.2,490.0 L130.8,488.9 L130.3,487.8 L129.9,486.7 L129.5,485.6 L129.1,484.5 L128.7,483.3 L128.3,482.2 L127.9,481.1 L127.5,480.0 L127.1,478.9 L126.7,477.8 L126.4,476.7 L126.0,475.6 L125.6,474.4 L125.3,473.3 L124.9,472.2 L124.5,471.1 L124.2,469.9 L123.9,468.8 L123.5,467.7 L123.2,466.6 L122.9,465.4 L122.5,464.3 L122.2,463.2 L121.9,462.0 L121.6,460.9 L121.3,459.7 L121.0,458.6 L120.7,457.5 L120.4,456.3 L120.1,455.2 L119.9,454.0 L119.6,452.9 L119.3,451.7 L119.1,450.6 L118.8,449.4 L118.5,448.3 L118.3,447.1 L118.1,446.0 L117.8,444.8 L117.6,443.7 L117.4,442.5 L117.1,441.4 L116.9,440.2 L116.7,439.0 L116.5,437.9 L116.3,436.7 L116.1,435.6 L115.9,434.4 L115.7,433.2 L115.5,432.1 L115.4,430.9 L115.2,429.7 L115.0,428.6 L114.9,427.4 L114.7,426.2 L114.6,425.1 L114.4,423.9 L114.3,422.7 L114.1,421.6 L114.0,420.4 L113.9,419.2 L113.8,418.1 L113.6,416.9 L113.5,415.7 L113.4,414.5 L113.3,413.4 L113.2,412.2 L113.1,411.0 L113.1,409.8 L113.0,408.7 L112.9,407.5 L112.8,406.3 L112.8,405.1 L112.7,404.0 L112.7,402.8 L112.6,401.6 L112.6,400.4 L112.5,399.2 L112.5,398.1 L112.5,396.9 L112.4,395.7 L112.4,394.5 L112.4,393.4 L112.4,392.2 L112.4,391.0 L112.4,389.8 L112.4,388.6 L112.4,387.5 L112.4,386.3 L112.5,385.1 L112.5,383.9 L112.5,382.8 L112.6,381.6 L112.6,380.4 L112.7,379.2 L112.7,378.0 L112.8,376.9 L112.8,375.7 L112.9,374.5 L113.0,373.3 L113.1,372.2 L113.1,371.0 L113.2,369.8 L113.3,368.6 L113.4,367.5 L113.5,366.3 L113.6,365.1 L113.8,363.9 L113.9,362.8 L114.0,361.6 L114.1,360.4 L114.3,359.3 L114.4,358.1 L114.6,356.9 L114.7,355.8 L114.9,354.6 L115.0,353.4 L115.2,352.3 L115.4,351.1 L115.5,349.9 L115.7,348.8 L115.9,347.6 L116.1,346.4 L116.3,345.3 L116.5,344.1 L116.7,343.0 L116.9,341.8 L117.1,340.6 L117.4,339.5 L117.6,338.3 L117.8,337.2 L118.1,336.0 L118.3,334.9 L118.5,333.7 L118.8,332.6 L119.1,331.4 L119.3,330.3 L119.6,329.1 L119.9,328.0 L120.1,326.8 L120.4,325.7 L120.7,324.5 L121.0,323.4 L121.3,322.3 L121.6,321.1 L121.9,320.0 L122.2,318.8 L122.5,317.7 L122.9,316.6 L123.2,315.4 L123.5,314.3 L123.9,313.2 L124.2,312.1 L124.5,310.9 L124.9,309.8 L125.3,308.7 L125.6,307.6 L126.0,306.4 L126.4,305.3 L126.7,304.2 L127.1,303.1 L127.5,302.0 L127.9,300.9 L128.3,299.8 L128.7,298.7 L129.1,297.5 L129.5,296.4 L129.9,295.3 L130.3,294.2 L130.8,293.1 L131.2,292.0 L131.6,290.9 L132.1,289.9 L132.5,288.8 L133.0,287.7 L133.4,286.6 L133.9,285.5 L134.3,284.4 L134.8,283.3 L135.3,282.3 L135.7,281.2 L136.2,280.1 L136.7,279.0 L137.2,278.0 L137.7,276.9 L138.2,275.8 L138.7,274.8 L139.2,273.7 L139.7,272.6 L140.2,271.6 L140.8,270.5 L141.3,269.5 L141.8,268.4 L142.4,267.4 L142.9,266.3 L143.5,265.3 L144.0,264.2 L144.6,263.2 L145.1,262.2 L145.7,261.1 L146.3,260.1 L146.8,259.1 L147.4,258.0 L148.0,257.0 L148.6,256.0 L149.2,255.0 L149.8,254.0 L150.4,253.0 L151.0,251.9 L151.6,250.9 L152.2,249.9 L152.8,248.9 L153.4,247.9 L154.1,246.9 L154.7,245.9 L155.3,244.9 L156.0,243.9 L156.6,243.0 L157.3,242.0 L157.9,241.0 L158.6,240.0 L159.2,239.0 L159.9,238.1 L160.6,237.1 L161.2,236.1 L161.9,235.2 L162.6,234.2 L163.3,233.3 L164.0,232.3 L164.7,231.3 L165.4,230.4 L166.1,229.5 L166.8,228.5 L167.5,227.6 L168.2,226.6 L168.9,225.7 L169.6,224.8 L170.4,223.8 L171.1,222.9 L171.8,222.0 L172.6,221.1 L173.3,220.2 L174.1,219.3 L174.8,218.4 L175.6,217.4 L176.3,216.5 L177.1,215.6 L177.9,214.8 L178.6,213.9 L179.4,213.0 L180.2,212.1 L181.0,211.2 L181.8,210.3 L182.5,209.5 L183.3,208.6 L184.1,207.7 L184.9,206.9 L185.7,206.0 L186.5,205.1 L187.4,204.3 L188.2,203.4 L189.0,202.6 L189.8,201.8 L190.6,200.9 L191.5,200.1 L192.3,199.2 L193.2,198.4 L194.0,197.6 L194.8,196.8 L195.7,196.0 L196.5,195.1 L197.4,194.3 L198.3,193.5 L199.1,192.7 L200.0,191.9 L200.9,191.1 L201.7,190.4 L202.6,189.6 L203.5,188.8 L204.4,188.0 L205.3,187.2 L206.2,186.5 L207.0,185.7 L207.9,184.9 L208.8,184.2 L209.8,183.4 L210.7,182.7 L211.6,181.9 L212.5,181.2 L213.4,180.4 L214.3,179.7 L215.2,179.0 L216.2,178.2 L217.1,177.5 L218.0,176.8 L219.0,176.1 L219.9,175.4 L220.9,174.7 L221.8,174.0 L222.7,173.3 L223.7,172.6 L224.7,171.9 L225.6,171.2 L226.6,170.5 L227.5,169.8 L228.5,169.2 L229.5,168.5 L230.4,167.8 L231.4,167.2 L232.4,166.5 L233.4,165.9 L234.4,165.2 L235.3,164.6 L236.3,163.9 L237.3,163.3 L238.3,162.7 L239.3,162.0 L240.3,161.4 L241.3,160.8 L242.3,160.2 L243.3,159.6 L244.4,159.0 L245.4,158.4 L246.4,157.8 L247.4,157.2 L248.4,156.6 L249.4,156.0 L250.5,155.4 L251.5,154.9 L252.5,154.3 L253.6,153.7 L254.6,153.2 L255.6,152.6 L256.7,152.1 L257.7,151.5 L258.8,151.0 L259.8,150.4 L260.9,149.9 L261.9,149.4 L263.0,148.8 L264.0,148.3 L265.1,147.8 L266.2,147.3 L267.2,146.8 L268.3,146.3 L269.4,145.8 L270.4,145.3 L271.5,144.8 L272.6,144.3 L273.7,143.9 L274.7,143.4 L275.8,142.9 L276.9,142.5 L278.0,142.0 L279.1,141.6 L280.2,141.1 L281.3,140.7 L282.3,140.2 L283.4,139.8 L284.5,139.4 L285.6,138.9 L286.7,138.5 L287.8,138.1 L288.9,137.7 L290.1,137.3 L291.2,136.9 L292.3,136.5 L293.4,136.1 L294.5,135.7 L295.6,135.3 L296.7,135.0 L297.8,134.6 L298.9,133.9 L299.9,133.1 L300.8,132.2 L301.8,131.4 L302.7,130.5 L303.7,129.6 L304.7,128.7 L305.7,127.8 L306.7,127.0 L307.7,126.2 L308.8,125.5 L309.8,124.8 L310.9,124.2 L312.0,123.6 L313.1,123.1 L314.2,122.6 L315.4,122.2 L316.6,121.9 L317.7,121.7 L318.9,121.5 L320.2,121.4 L321.4,121.4 L322.6,121.4 L323.9,121.5 L325.1,121.7 L326.4,121.9 L327.7,122.1 L329.0,122.4 L330.2,122.7 L331.5,123.0 L332.8,123.3 L334.1,123.7 L335.3,124.0 L336.6,124.3 L337.8,124.6 L339.0,124.5 L340.2,124.3 L341.3,124.1 L342.5,124.0 L343.7,123.8 L344.8,123.6 L346.0,123.5 L347.2,123.3 L348.3,123.2 L349.5,123.0 L350.7,122.9 L351.8,122.7 L353.0,122.6 L354.2,122.5 L355.3,122.4 L356.5,122.2 L357.7,122.1 L358.9,122.0 L360.0,121.9 L361.2,121.8 L362.4,121.7 L363.6,121.7 L364.7,121.6 L365.9,121.5 L367.1,121.4 L368.3,121.4 L369.4,121.3 L370.6,121.3 L371.8,121.2 L373.0,121.2 L374.2,121.1 L375.3,121.1 L376.5,121.1 L377.7,121.0 L378.9,121.0 L380.0,121.0 L381.2,121.0 L382.4,121.0 L383.6,121.0 L384.8,121.0 L385.9,121.0 L387.1,121.0 L388.3,121.1 L389.5,121.1 L390.6,121.1 L391.8,121.2 L393.0,121.2 L394.2,121.3 L395.4,121.3 L396.5,121.4 L397.7,121.4 L398.9,121.5 L400.1,121.6 L401.2,121.7 L402.4,121.7 L403.6,121.8 L404.8,121.9 L405.9,122.0 L407.1,122.1 L408.3,122.2 L409.5,122.4 L410.6,122.5 L411.8,122.6 L413.0,122.7 L414.1,122.9 L415.3,123.0 L416.5,123.2 L417.6,123.3 L418.8,123.5 L420.0,123.6 L421.1,123.8 L422.3,124.0 L423.5,124.1 L424.6,124.3 L425.8,124.5 L427.0,124.7 L428.1,124.9 L429.3,125.1 L430.4,125.3 L431.6,125.5 L432.8,125.7 L433.9,126.0 L435.1,126.2 L436.2,126.4 L437.4,126.7 L438.5,126.9 L439.7,127.1 L440.8,127.4 L442.0,127.7 L443.1,127.9 L444.3,128.2 L445.4,128.5 L446.6,128.7 L447.7,129.0 L448.9,129.3 L450.0,129.6 L451.1,129.9 L452.3,130.2 L453.4,130.5 L454.6,130.8 L455.7,131.1 L456.8,131.5 L458.0,131.8 L459.1,132.1 L460.2,132.5 L461.3,132.8 L462.5,133.1 L463.6,133.5 L464.7,133.9 L465.8,134.2 L467.0,134.6 L468.1,135.0 L469.2,135.3 L470.3,135.7 L471.4,136.1 L472.5,136.5 L473.6,136.9 L474.7,137.3 L475.9,137.7 L477.0,138.1 L478.1,138.5 L479.2,138.9 L480.3,139.4 L481.4,139.8 L482.5,140.2 L483.5,140.7 L484.6,141.1 L485.7,141.6 L486.8,142.0 L487.9,142.5 L489.0,142.9 L490.1,143.4 L491.3,143.6 L492.6,143.5 L494.0,143.3 L495.3,143.2 L496.7,143.0 L498.1,142.8 L499.5,142.7 L500.8,142.7 L502.2,142.7 L503.4,142.8 L504.7,143.0 L505.9,143.3 L507.1,143.7 L508.2,144.2 L509.2,144.8 L510.2,145.5 L511.1,146.3 L512.0,147.2 L512.9,148.2 L513.7,149.2 L514.4,150.3 L515.1,151.5 L515.8,152.7 L516.5,154.0 L517.2,155.2 L517.9,156.4 L518.6,157.5 L519.4,158.4 L520.4,159.0 L521.5,159.6 L522.5,160.2 L523.5,160.8 L524.5,161.4 L525.5,162.0 L526.5,162.7 L527.5,163.3 L528.5,163.9 L529.5,164.6 L530.4,165.2 L531.4,165.9 L532.4,166.5 L533.4,167.2 L534.4,167.8 L535.3,168.5 L536.3,169.2 L537.3,169.8 L538.2,170.5 L539.2,171.2 L540.1,171.9 L541.1,172.6 L542.1,173.3 L543.1,173.8 L544.4,174.0 L545.8,174.1 L547.2,174.3 L548.6,174.4 L550.0,174.5 L551.4,174.7 L552.7,174.9 L554.0,175.2 L555.3,175.6 L556.4,176.1 L557.5,176.6 L558.6,177.3 L559.5,178.0 L560.4,178.9 L561.2,179.8 L561.9,180.8 L562.6,181.9 L563.1,183.1 L563.6,184.3 L564.1,185.6 L564.5,187.0 L564.9,188.3 L565.3,189.7 L565.6,191.0 L566.0,192.3 L566.5,193.5 L567.4,194.3 L568.3,195.1 L569.1,196.0 L570.0,196.8 L570.8,197.6 L571.6,198.4 L572.5,199.2 L573.3,200.1 L574.2,200.9 L575.0,201.8 L575.8,202.6 L576.6,203.4 L577.4,204.3 L578.3,205.1 L579.1,206.0 L579.9,206.9 L580.7,207.7 L581.5,208.6 L582.3,209.5 L583.0,210.3 L583.8,211.2 L584.6,212.1 L585.4,213.0 L586.2,213.9 L586.9,214.8 L587.7,215.6 L588.5,216.5 L589.2,217.4 L590.0,218.4 L590.7,219.3 L591.5,220.2 L592.2,221.1 L593.0,222.0 L593.7,222.9 L594.4,223.8 L595.2,224.8 L595.9,225.7 L596.6,226.6 L597.3,227.6 L598.0,228.5 L598.7,229.5 L599.4,230.4 L600.1,231.3 L600.8,232.3 L601.5,233.3 L602.2,234.2 L602.9,235.2 L603.6,236.1 L604.2,237.1 L604.9,238.1 L605.6,239.0 L606.2,240.0 L606.9,241.0 L607.5,242.0 L608.2,243.0 L608.8,243.9 L609.5,244.9 L610.1,245.9 L610.7,246.9 L611.4,247.9 L612.0,248.9 L612.6,249.9 L613.2,250.9 L613.8,251.9 L614.4,253.0 L615.0,254.0 L615.6,255.0 L616.2,256.0 L617.1,256.9 L618.3,257.5 L619.6,258.2 L620.9,258.8 L622.2,259.4 L623.5,260.1 L624.8,260.8 L626.0,261.5 L627.1,262.3 L628.1,263.1 L629.0,264.0 L629.9,264.9 L630.6,265.9 L631.2,267.0 L631.7,268.1 L632.0,269.2 L632.3,270.5 L632.4,271.7 L632.5,273.1 L632.4,274.4 L632.3,275.8 L632.1,277.2 L631.8,278.7 L631.5,280.1 L631.2,281.5 L631.0,282.9 L630.8,284.3 L630.9,285.5 L631.4,286.6 L631.8,287.7 L632.3,288.8 L632.7,289.9 L633.2,290.9 L633.6,292.0 L634.0,293.1 L634.5,294.2 L634.9,295.3 L635.3,296.4 L635.7,297.5 L636.1,298.7 L636.5,299.8 L636.9,300.9 L637.3,302.0 L637.7,303.1 L638.1,304.2 L638.4,305.3 L638.8,306.4 L639.2,307.6 L639.5,308.7 L639.9,309.8 L640.3,310.9 L640.6,312.1 L640.9,313.2 L641.3,314.3 L641.6,315.4 L641.9,316.6 L642.3,317.7 L642.6,318.8 L642.9,320.0 L643.2,321.1 L643.5,322.3 L643.8,323.4 L644.1,324.5 L644.4,325.7 L644.7,326.8 L644.9,328.0 L645.2,329.1 L645.5,330.3 L645.7,331.4 L646.0,332.6 L646.3,333.7 L646.5,334.9 L646.7,336.0 L647.0,337.2 L647.2,338.3 L647.4,339.5 L647.7,340.6 L647.9,341.8 L648.1,343.0 L648.3,344.1 L648.5,345.3 L648.7,346.4 L648.9,347.6 L649.1,348.8 L649.3,349.9 L649.4,351.1 L649.6,352.3 L649.8,353.4 L649.9,354.6 L650.1,355.8 L650.2,356.9 L650.4,358.1 L650.5,359.3 L650.7,360.4 L650.8,361.6 L650.9,362.8 L651.0,363.9 L651.2,365.1 L651.3,366.3 L651.4,367.5 L651.5,368.6 L651.6,369.8 L651.7,371.0 L651.7,372.2 L651.8,373.3 L651.9,374.5 L652.0,375.7 L652.0,376.9 L652.1,378.0 L652.1,379.2 L652.2,380.4 L652.2,381.6 L652.3,382.8 L652.3,383.9 L652.3,385.1 L652.4,386.3 L652.4,387.5 L652.4,388.6 L652.4,389.8 L652.4,391.0 L652.4,392.2 L652.4,393.4 L652.4,394.5 L652.4,395.7 L652.3,396.9 L652.3,398.1 L652.3,399.2 L652.2,400.4 L652.2,401.6 L652.1,402.8 L652.1,404.0 L652.0,405.1 L652.0,406.3 L651.9,407.5 L651.8,408.7 L651.7,409.8 L651.7,411.0 L651.6,412.2 L651.5,413.4 L651.4,414.5 L651.3,415.7 L651.2,416.9 L651.0,418.1 L650.9,419.2 L650.8,420.4 L650.7,421.6 L650.5,422.7 L650.4,423.9 L650.2,425.1 L650.1,426.2 L649.9,427.4 L649.8,428.6 L649.6,429.7 L649.4,430.9 L649.3,432.1 L649.1,433.2 L648.9,434.4 L648.7,435.6 L648.5,436.7 L648.3,437.9 L648.1,439.0 L647.9,440.2 L647.7,441.4 L647.4,442.5 L647.2,443.7 L647.0,444.8 L646.7,446.0 L646.5,447.1 L646.3,448.3 L646.0,449.4 L645.7,450.6 L645.5,451.7 L645.2,452.9 L644.9,454.0 L644.7,455.2 L644.4,456.3 L644.1,457.5 L643.8,458.6 L643.5,459.7 L643.2,460.9 L642.9,462.0 L642.6,463.2 L642.3,464.3 L641.9,465.4 L641.6,466.6 L641.3,467.7 L640.9,468.8 L640.6,469.9 L640.3,471.1 L639.9,472.2 L639.5,473.3 L639.2,474.4 L638.8,475.6 L638.4,476.7 L638.1,477.8 L637.7,478.9 L637.3,480.0 L636.9,481.1 L636.5,482.2 L636.1,483.3 L635.7,484.5 L635.3,485.6 L634.9,486.7 L634.5,487.8 L634.0,488.9 L633.6,490.0 L633.2,491.1 L632.7,492.1 L632.3,493.2 L631.8,494.3 L631.4,495.4 L630.9,496.5 L630.5,497.6 L630.0,498.7 L629.5,499.7 L629.1,500.8 L628.6,501.9 L628.1,503.0 L627.6,504.0 L627.1,505.1 L626.6,506.2 L626.1,507.2 L625.6,508.3 L625.1,509.4 L624.6,510.4 L624.0,511.5 L623.5,512.5 L623.0,513.6 L622.4,514.6 L621.9,515.7 L621.3,516.7 L620.8,517.8 L620.2,518.8 L619.7,519.8 L619.1,520.9 L618.5,521.9 L618.0,522.9 L617.4,524.0 L616.8,525.0 L616.2,526.0 L615.6,527.0 L615.0,528.0 L614.4,529.0 L613.8,530.1 L613.2,531.1 L612.6,532.1 L612.0,533.1 L611.4,534.1 L610.7,535.1 L610.1,536.1 L609.5,537.1 L608.8,538.1 L608.2,539.0 L607.5,540.0 L606.9,541.0 L606.2,542.0 L605.6,543.0 L604.9,543.9 L604.2,544.9 L603.6,545.9 L602.9,546.8 L602.2,547.8 L601.5,548.7 L600.8,549.7 L600.1,550.7 L599.4,551.6 L598.7,552.5 L598.0,553.5 L597.3,554.4 L596.6,555.4 L595.9,556.3 L595.2,557.2 L594.4,558.2 L593.7,559.1 L593.0,560.0 L592.2,560.9 L591.5,561.8 L590.7,562.7 L590.0,563.6 L589.2,564.6 L588.5,565.5 L587.7,566.4 L586.9,567.2 L586.2,568.1 L585.4,569.0 L584.6,569.9 L583.8,570.8 L583.0,571.7 L582.3,572.5 L581.5,573.4 L580.7,574.3 L579.9,575.1 L579.1,576.0 L578.3,576.9 L577.4,577.7 L576.6,578.6 L575.8,579.4 L575.0,580.2 L574.2,581.1 L573.3,581.9 L572.5,582.8 L571.6,583.6 L570.8,584.4 L570.0,585.2 L569.1,586.0 L568.3,586.9 L567.4,587.7 L566.5,588.5 L565.7,589.3 L564.8,590.1 L563.9,590.9 L563.1,591.6 L562.2,592.4 L561.3,593.2 L560.4,594.0 L559.5,594.8 L558.6,595.5 L557.8,596.3 L556.9,597.1 L556.0,597.8 L555.0,598.6 L554.1,599.3 L553.2,600.1 L552.3,600.8 L551.4,601.6 L550.5,602.3 L549.6,603.0 L548.6,603.8 L547.7,604.5 L546.8,605.2 L545.8,605.9 L544.9,606.6 L543.9,607.3 L543.0,608.0 L542.1,608.7 L541.1,609.4 L540.1,610.1 L539.2,610.8 L538.2,611.5 L537.3,612.2 L536.3,612.8 L535.3,613.5 L534.4,614.2 L533.4,614.8 L532.4,615.5 L531.4,616.1 L530.4,616.8 L529.5,617.4 L528.5,618.1 L527.5,618.7 L526.5,619.3 L525.5,620.0 L524.5,620.6 L523.5,621.2 L522.5,621.8 L521.5,622.4 L520.4,623.0 L519.4,623.6 L518.4,624.2 L517.4,624.8 L516.4,625.4 L515.4,626.0 L514.3,626.6 L513.3,627.1 L512.3,627.7 L511.2,628.3 L510.2,628.8 L509.2,629.4 L508.1,629.9 L507.1,630.5 L506.0,631.0 L505.0,631.6 L503.9,632.1 L502.9,632.6 L501.8,633.2 L500.8,633.7 L499.7,634.2 L498.6,634.7 L497.6,635.2 L496.5,635.7 L495.4,636.2 L494.4,636.7 L493.3,637.2 L492.2,637.7 L491.1,638.1 L490.1,638.6 L489.0,639.1 L487.9,639.5 L486.8,640.0 L485.7,640.4 L484.6,640.9 L483.5,641.3 L482.5,641.8 L481.4,642.2 L480.3,642.6 L479.2,643.1 L478.1,643.5 L477.0,643.9 L475.9,644.3 L474.7,644.7 L473.6,645.1 L472.5,645.5 L471.4,645.9 L470.3,646.3 L469.2,646.7 L468.1,647.0 L467.0,647.4 L465.8,647.8 L464.7,648.1 L463.6,648.5 L462.5,648.9 L461.3,649.2 L460.2,649.5 L459.1,649.9 L458.0,650.2 L456.8,650.5 L455.7,650.9 L454.6,651.2 L453.4,651.5 L452.3,651.8 L451.1,652.1 L450.0,652.4 L448.9,652.7 L447.7,653.0 L446.6,653.3 L445.4,653.5 L444.3,653.8 L443.1,654.1 L442.0,654.3 L440.8,654.6 L439.7,654.9 L438.5,655.1 L437.4,655.3 L436.2,655.6 L435.1,655.8 L433.9,656.0 L432.8,656.3 L431.6,656.5 L430.4,656.7 L429.3,656.9 L428.1,657.1 L427.0,657.3 L425.8,657.5 L424.6,657.7 L423.5,657.9 L422.3,658.0 L421.1,658.2 L420.0,658.4 L418.8,658.5 L417.6,658.7 L416.5,658.8 L415.3,659.0 L414.1,659.1 L413.0,659.3 L411.8,659.4 L410.6,659.5 L409.5,659.6 L408.3,659.8 L407.1,659.9 L405.9,660.0 L404.8,660.1 L403.6,660.2 L402.4,660.3 L401.2,660.3 L400.1,660.4 L398.9,660.5 L397.7,660.6 L396.5,660.6 L395.4,660.7 L394.2,660.7 L393.0,660.8 L391.8,660.8 L390.6,660.9 L389.5,660.9 L388.3,660.9 L387.1,661.0 L385.9,661.0 L384.8,661.0 L383.6,661.0 L382.4,661.0" fill="none" stroke="#0a8ad6" stroke-width="4.8"/><circle cx="382.4" cy="391.0" r="261.3" fill="none" stroke="#8c8c8c" stroke-width="2.7"/><circle cx="382.4" cy="391.0" r="249" fill="none" stroke="#0a8ad6" stroke-width="22.2"/><circle cx="382.4" cy="391.0" r="206" fill="none" stroke="#aba8a4" stroke-width="64"/><path d="M382.4,391.0 L382.4,631.0 L374.0,630.9 L365.7,630.4 L357.3,629.7 L349.0,628.7 L340.7,627.4 L332.5,625.8 L324.3,623.9 L316.2,621.7 L308.2,619.3 L300.3,616.5 L292.5,613.5 L284.8,610.3 L277.2,606.7 L269.7,602.9 L262.4,598.8 L255.2,594.5 L248.2,590.0 L241.3,585.2 L234.6,580.1 L228.1,574.9 L221.8,569.4 L215.7,563.6 L209.8,557.7 L204.0,551.6 L198.5,545.3 L193.3,538.8 L188.2,532.1 L183.4,525.2 L178.9,518.2 L174.6,511.0 L170.5,503.7 L166.7,496.2 L163.1,488.6 L159.9,480.9 L156.9,473.1 L154.1,465.2 L151.7,457.2 L149.5,449.1 L147.6,440.9 L146.0,432.7 L144.7,424.4 L143.7,416.1 L143.0,407.7 L142.5,399.4 L142.4,391.0 L142.5,382.6 L143.0,374.3 L143.7,365.9 L144.7,357.6 L146.0,349.3 L147.6,341.1 L149.5,332.9 L151.7,324.8 L154.1,316.8 L156.9,308.9 L159.9,301.1 L163.1,293.4 L166.7,285.8 L170.5,278.3 L174.6,271.0 L178.9,263.8 L183.4,256.8 L188.2,249.9 L193.3,243.2 L198.5,236.7 L204.0,230.4 L209.8,224.3 L215.7,218.4 L221.8,212.6 L228.1,207.1 L234.6,201.9 L241.3,196.8 L248.2,192.0 L255.2,187.5 L262.4,183.2 L269.7,179.1 L277.2,175.3 L284.8,171.7 L292.5,168.5 L300.3,165.5 L308.2,162.7 L316.2,160.3 L324.3,158.1 L332.5,156.2 L340.7,154.6 L349.0,153.3 L357.3,152.3 L365.7,151.6 L374.0,151.1 L382.4,151.0 L390.8,151.1 L399.1,151.6 L407.5,152.3 L415.8,153.3 L424.1,154.6 L420.8,154.1 L420.7,159.5 L455.1,177.5 L468.7,191.5 L486.9,211.5 L497.0,235.6 L499.9,257.5 L498.3,266.7 Z" fill="#bea264" mask="url(#ringmask)"/><line x1="160.2" y1="479.0" x2="166.2" y2="476.6" stroke="#0a8ad6" stroke-width="2.5"/><line x1="157.5" y1="472.0" x2="163.6" y2="469.8" stroke="#0a8ad6" stroke-width="2.5"/><line x1="155.1" y1="464.9" x2="166.5" y2="461.1" stroke="#0a8ad6" stroke-width="2.5"/><line x1="152.9" y1="457.7" x2="159.1" y2="455.9" stroke="#0a8ad6" stroke-width="2.5"/><line x1="150.9" y1="450.4" x2="157.2" y2="448.8" stroke="#0a8ad6" stroke-width="2.5"/><line x1="149.2" y1="443.1" x2="155.5" y2="441.7" stroke="#0a8ad6" stroke-width="2.5"/><line x1="147.6" y1="435.8" x2="154.0" y2="434.6" stroke="#0a8ad6" stroke-width="2.5"/><line x1="146.3" y1="428.4" x2="158.2" y2="426.5" stroke="#0a8ad6" stroke-width="2.5"/><line x1="145.3" y1="421.0" x2="151.7" y2="420.1" stroke="#0a8ad6" stroke-width="2.5"/><line x1="144.5" y1="413.5" x2="150.9" y2="412.9" stroke="#0a8ad6" stroke-width="2.5"/><line x1="143.9" y1="406.0" x2="150.4" y2="405.6" stroke="#0a8ad6" stroke-width="2.5"/><line x1="143.5" y1="398.5" x2="150.0" y2="398.3" stroke="#0a8ad6" stroke-width="2.5"/><line x1="143.4" y1="391.0" x2="155.4" y2="391.0" stroke="#0a8ad6" stroke-width="2.5"/><line x1="143.5" y1="383.5" x2="150.0" y2="383.7" stroke="#0a8ad6" stroke-width="2.5"/><line x1="143.9" y1="376.0" x2="150.4" y2="376.4" stroke="#0a8ad6" stroke-width="2.5"/><line x1="144.5" y1="368.5" x2="150.9" y2="369.1" stroke="#0a8ad6" stroke-width="2.5"/><line x1="145.3" y1="361.0" x2="151.7" y2="361.9" stroke="#0a8ad6" stroke-width="2.5"/><line x1="146.3" y1="353.6" x2="158.2" y2="355.5" stroke="#0a8ad6" stroke-width="2.5"/><line x1="147.6" y1="346.2" x2="154.0" y2="347.4" stroke="#0a8ad6" stroke-width="2.5"/><line x1="149.2" y1="338.9" x2="155.5" y2="340.3" stroke="#0a8ad6" stroke-width="2.5"/><line x1="150.9" y1="331.6" x2="157.2" y2="333.2" stroke="#0a8ad6" stroke-width="2.5"/><line x1="152.9" y1="324.3" x2="159.1" y2="326.1" stroke="#0a8ad6" stroke-width="2.5"/><line x1="155.1" y1="317.1" x2="166.5" y2="320.9" stroke="#0a8ad6" stroke-width="2.5"/><line x1="157.5" y1="310.0" x2="163.6" y2="312.2" stroke="#0a8ad6" stroke-width="2.5"/><line x1="160.2" y1="303.0" x2="166.2" y2="305.4" stroke="#0a8ad6" stroke-width="2.5"/><line x1="163.1" y1="296.1" x2="169.0" y2="298.7" stroke="#0a8ad6" stroke-width="2.5"/><line x1="166.1" y1="289.2" x2="172.0" y2="292.0" stroke="#0a8ad6" stroke-width="2.5"/><line x1="169.4" y1="282.5" x2="180.1" y2="287.9" stroke="#0a8ad6" stroke-width="2.5"/><line x1="173.0" y1="275.9" x2="178.7" y2="279.0" stroke="#0a8ad6" stroke-width="2.5"/><line x1="176.7" y1="269.3" x2="182.3" y2="272.6" stroke="#0a8ad6" stroke-width="2.5"/><line x1="180.6" y1="262.9" x2="186.1" y2="266.4" stroke="#0a8ad6" stroke-width="2.5"/><line x1="184.7" y1="256.7" x2="190.1" y2="260.3" stroke="#0a8ad6" stroke-width="2.5"/><line x1="189.0" y1="250.5" x2="198.8" y2="257.6" stroke="#0a8ad6" stroke-width="2.5"/><line x1="193.6" y1="244.5" x2="198.7" y2="248.5" stroke="#0a8ad6" stroke-width="2.5"/><line x1="198.2" y1="238.7" x2="203.3" y2="242.8" stroke="#0a8ad6" stroke-width="2.5"/><line x1="203.1" y1="232.9" x2="208.0" y2="237.2" stroke="#0a8ad6" stroke-width="2.5"/><line x1="208.2" y1="227.4" x2="212.9" y2="231.8" stroke="#0a8ad6" stroke-width="2.5"/><line x1="213.4" y1="222.0" x2="221.9" y2="230.5" stroke="#0a8ad6" stroke-width="2.5"/><line x1="218.8" y1="216.8" x2="223.2" y2="221.5" stroke="#0a8ad6" stroke-width="2.5"/><line x1="224.3" y1="211.7" x2="228.6" y2="216.6" stroke="#0a8ad6" stroke-width="2.5"/><line x1="230.1" y1="206.8" x2="234.2" y2="211.9" stroke="#0a8ad6" stroke-width="2.5"/><line x1="235.9" y1="202.2" x2="239.9" y2="207.3" stroke="#0a8ad6" stroke-width="2.5"/><line x1="241.9" y1="197.6" x2="249.0" y2="207.4" stroke="#0a8ad6" stroke-width="2.5"/><line x1="248.1" y1="193.3" x2="251.7" y2="198.7" stroke="#0a8ad6" stroke-width="2.5"/><line x1="254.3" y1="189.2" x2="257.8" y2="194.7" stroke="#0a8ad6" stroke-width="2.5"/><line x1="260.7" y1="185.3" x2="264.0" y2="190.9" stroke="#0a8ad6" stroke-width="2.5"/><line x1="267.3" y1="181.6" x2="270.4" y2="187.3" stroke="#0a8ad6" stroke-width="2.5"/><line x1="273.9" y1="178.0" x2="279.3" y2="188.7" stroke="#0a8ad6" stroke-width="2.5"/><line x1="280.6" y1="174.7" x2="283.4" y2="180.6" stroke="#0a8ad6" stroke-width="2.5"/><line x1="287.5" y1="171.7" x2="290.1" y2="177.6" stroke="#0a8ad6" stroke-width="2.5"/><line x1="294.4" y1="168.8" x2="296.8" y2="174.8" stroke="#0a8ad6" stroke-width="2.5"/><line x1="301.4" y1="166.1" x2="303.6" y2="172.2" stroke="#0a8ad6" stroke-width="2.5"/><line x1="308.5" y1="163.7" x2="312.3" y2="175.1" stroke="#0a8ad6" stroke-width="2.5"/><line x1="315.7" y1="161.5" x2="317.5" y2="167.7" stroke="#0a8ad6" stroke-width="2.5"/><line x1="323.0" y1="159.5" x2="324.6" y2="165.8" stroke="#0a8ad6" stroke-width="2.5"/><line x1="330.3" y1="157.8" x2="331.7" y2="164.1" stroke="#0a8ad6" stroke-width="2.5"/><line x1="337.6" y1="156.2" x2="338.8" y2="162.6" stroke="#0a8ad6" stroke-width="2.5"/><line x1="345.0" y1="154.9" x2="346.9" y2="166.8" stroke="#0a8ad6" stroke-width="2.5"/><line x1="352.4" y1="153.9" x2="353.3" y2="160.3" stroke="#0a8ad6" stroke-width="2.5"/><line x1="359.9" y1="153.1" x2="360.5" y2="159.5" stroke="#0a8ad6" stroke-width="2.5"/><line x1="367.4" y1="152.5" x2="367.8" y2="159.0" stroke="#0a8ad6" stroke-width="2.5"/><line x1="374.9" y1="152.1" x2="375.1" y2="158.6" stroke="#0a8ad6" stroke-width="2.5"/><line x1="382.4" y1="152.0" x2="382.4" y2="164.0" stroke="#0a8ad6" stroke-width="2.5"/><line x1="389.9" y1="152.1" x2="389.7" y2="158.6" stroke="#0a8ad6" stroke-width="2.5"/><line x1="397.4" y1="152.5" x2="397.0" y2="159.0" stroke="#0a8ad6" stroke-width="2.5"/><line x1="404.9" y1="153.1" x2="404.3" y2="159.5" stroke="#0a8ad6" stroke-width="2.5"/><line x1="412.4" y1="153.9" x2="411.5" y2="160.3" stroke="#0a8ad6" stroke-width="2.5"/><line x1="419.8" y1="154.9" x2="417.9" y2="166.8" stroke="#0a8ad6" stroke-width="2.5"/><line x1="427.2" y1="156.2" x2="426.0" y2="162.6" stroke="#0a8ad6" stroke-width="2.5"/><line x1="434.5" y1="157.8" x2="433.1" y2="164.1" stroke="#0a8ad6" stroke-width="2.5"/><line x1="441.8" y1="159.5" x2="440.2" y2="165.8" stroke="#0a8ad6" stroke-width="2.5"/><line x1="449.1" y1="161.5" x2="447.3" y2="167.7" stroke="#0a8ad6" stroke-width="2.5"/><line x1="456.3" y1="163.7" x2="452.5" y2="175.1" stroke="#0a8ad6" stroke-width="2.5"/><line x1="463.4" y1="166.1" x2="461.2" y2="172.2" stroke="#0a8ad6" stroke-width="2.5"/><line x1="470.4" y1="168.8" x2="468.0" y2="174.8" stroke="#0a8ad6" stroke-width="2.5"/><line x1="477.3" y1="171.7" x2="474.7" y2="177.6" stroke="#0a8ad6" stroke-width="2.5"/><line x1="484.2" y1="174.7" x2="481.4" y2="180.6" stroke="#0a8ad6" stroke-width="2.5"/><line x1="490.9" y1="178.0" x2="485.5" y2="188.7" stroke="#0a8ad6" stroke-width="2.5"/><line x1="497.5" y1="181.6" x2="494.4" y2="187.3" stroke="#0a8ad6" stroke-width="2.5"/><line x1="504.1" y1="185.3" x2="500.8" y2="190.9" stroke="#0a8ad6" stroke-width="2.5"/><line x1="510.5" y1="189.2" x2="507.0" y2="194.7" stroke="#0a8ad6" stroke-width="2.5"/><line x1="516.7" y1="193.3" x2="513.1" y2="198.7" stroke="#0a8ad6" stroke-width="2.5"/><line x1="522.9" y1="197.6" x2="515.8" y2="207.4" stroke="#0a8ad6" stroke-width="2.5"/><line x1="528.9" y1="202.2" x2="524.9" y2="207.3" stroke="#0a8ad6" stroke-width="2.5"/><line x1="534.7" y1="206.8" x2="530.6" y2="211.9" stroke="#0a8ad6" stroke-width="2.5"/><line x1="540.5" y1="211.7" x2="536.2" y2="216.6" stroke="#0a8ad6" stroke-width="2.5"/><line x1="546.0" y1="216.8" x2="541.6" y2="221.5" stroke="#0a8ad6" stroke-width="2.5"/><line x1="551.4" y1="222.0" x2="542.9" y2="230.5" stroke="#0a8ad6" stroke-width="2.5"/><line x1="556.6" y1="227.4" x2="551.9" y2="231.8" stroke="#0a8ad6" stroke-width="2.5"/><line x1="561.7" y1="232.9" x2="556.8" y2="237.2" stroke="#0a8ad6" stroke-width="2.5"/><line x1="566.6" y1="238.7" x2="561.5" y2="242.8" stroke="#0a8ad6" stroke-width="2.5"/><line x1="571.2" y1="244.5" x2="566.1" y2="248.5" stroke="#0a8ad6" stroke-width="2.5"/><line x1="575.8" y1="250.5" x2="566.0" y2="257.6" stroke="#0a8ad6" stroke-width="2.5"/><line x1="580.1" y1="256.7" x2="574.7" y2="260.3" stroke="#0a8ad6" stroke-width="2.5"/><line x1="584.2" y1="262.9" x2="578.7" y2="266.4" stroke="#0a8ad6" stroke-width="2.5"/><line x1="588.1" y1="269.3" x2="582.5" y2="272.6" stroke="#0a8ad6" stroke-width="2.5"/><line x1="591.8" y1="275.9" x2="586.1" y2="279.0" stroke="#0a8ad6" stroke-width="2.5"/><line x1="595.4" y1="282.5" x2="584.7" y2="287.9" stroke="#0a8ad6" stroke-width="2.5"/><line x1="598.7" y1="289.2" x2="592.8" y2="292.0" stroke="#0a8ad6" stroke-width="2.5"/><line x1="601.7" y1="296.1" x2="595.8" y2="298.7" stroke="#0a8ad6" stroke-width="2.5"/><line x1="604.6" y1="303.0" x2="598.6" y2="305.4" stroke="#0a8ad6" stroke-width="2.5"/><line x1="607.3" y1="310.0" x2="601.2" y2="312.2" stroke="#0a8ad6" stroke-width="2.5"/><line x1="609.7" y1="317.1" x2="598.3" y2="320.9" stroke="#0a8ad6" stroke-width="2.5"/><line x1="611.9" y1="324.3" x2="605.7" y2="326.1" stroke="#0a8ad6" stroke-width="2.5"/><line x1="613.9" y1="331.6" x2="607.6" y2="333.2" stroke="#0a8ad6" stroke-width="2.5"/><line x1="615.6" y1="338.9" x2="609.3" y2="340.3" stroke="#0a8ad6" stroke-width="2.5"/><line x1="617.2" y1="346.2" x2="610.8" y2="347.4" stroke="#0a8ad6" stroke-width="2.5"/><line x1="618.5" y1="353.6" x2="606.6" y2="355.5" stroke="#0a8ad6" stroke-width="2.5"/><line x1="619.5" y1="361.0" x2="613.1" y2="361.9" stroke="#0a8ad6" stroke-width="2.5"/><line x1="620.3" y1="368.5" x2="613.9" y2="369.1" stroke="#0a8ad6" stroke-width="2.5"/><line x1="620.9" y1="376.0" x2="614.4" y2="376.4" stroke="#0a8ad6" stroke-width="2.5"/><line x1="621.3" y1="383.5" x2="614.8" y2="383.7" stroke="#0a8ad6" stroke-width="2.5"/><line x1="621.4" y1="391.0" x2="609.4" y2="391.0" stroke="#0a8ad6" stroke-width="2.5"/><line x1="621.3" y1="398.5" x2="614.8" y2="398.3" stroke="#0a8ad6" stroke-width="2.5"/><line x1="620.9" y1="406.0" x2="614.4" y2="405.6" stroke="#0a8ad6" stroke-width="2.5"/><line x1="620.3" y1="413.5" x2="613.9" y2="412.9" stroke="#0a8ad6" stroke-width="2.5"/><line x1="619.5" y1="421.0" x2="613.1" y2="420.1" stroke="#0a8ad6" stroke-width="2.5"/><line x1="618.5" y1="428.4" x2="606.6" y2="426.5" stroke="#0a8ad6" stroke-width="2.5"/><line x1="617.2" y1="435.8" x2="610.8" y2="434.6" stroke="#0a8ad6" stroke-width="2.5"/><line x1="615.6" y1="443.1" x2="609.3" y2="441.7" stroke="#0a8ad6" stroke-width="2.5"/><line x1="613.9" y1="450.4" x2="607.6" y2="448.8" stroke="#0a8ad6" stroke-width="2.5"/><line x1="611.9" y1="457.7" x2="605.7" y2="455.9" stroke="#0a8ad6" stroke-width="2.5"/><line x1="609.7" y1="464.9" x2="598.3" y2="461.1" stroke="#0a8ad6" stroke-width="2.5"/><line x1="607.3" y1="472.0" x2="601.2" y2="469.8" stroke="#0a8ad6" stroke-width="2.5"/><line x1="604.6" y1="479.0" x2="598.6" y2="476.6" stroke="#0a8ad6" stroke-width="2.5"/><circle cx="382.4" cy="391.0" r="210" fill="none" stroke="#0a8ad6" stroke-width="1"/><polygon points="382.4,182.5 486.6,210.4 563.0,286.8 590.9,391.0 563.0,495.2 486.6,571.6 382.4,599.5 278.1,571.6 201.8,495.3 173.9,391.0 201.8,286.8 278.1,210.4" fill="none" stroke="#0a8ad6" stroke-width="2"/><text x="382.4" y="177.5" transform="rotate(0.0 382.4 177.5)" font-family="Liberation Sans" font-weight="bold" font-size="17" fill="#fff" stroke="#fff" stroke-width="0.3" text-anchor="middle" dominant-baseline="central" textLength="19" lengthAdjust="spacingAndGlyphs">100</text><text x="415.8" y="180.1" transform="rotate(9.0 415.8 180.1)" font-family="Liberation Sans" font-weight="bold" font-size="17" fill="#fff" stroke="#fff" stroke-width="0.3" text-anchor="middle" dominant-baseline="central" textLength="13" lengthAdjust="spacingAndGlyphs">95</text><text x="349.0" y="180.1" transform="rotate(-9.0 349.0 180.1)" font-family="Liberation Sans" font-weight="bold" font-size="17" fill="#fff" stroke="#fff" stroke-width="0.3" text-anchor="middle" dominant-baseline="central" textLength="13" lengthAdjust="spacingAndGlyphs">95</text><text x="448.4" y="187.9" transform="rotate(18.0 448.4 187.9)" font-family="Liberation Sans" font-weight="bold" font-size="17" fill="#fff" stroke="#fff" stroke-width="0.3" text-anchor="middle" dominant-baseline="central" textLength="13" lengthAdjust="spacingAndGlyphs">90</text><text x="316.4" y="187.9" transform="rotate(-18.0 316.4 187.9)" font-family="Liberation Sans" font-weight="bold" font-size="17" fill="#fff" stroke="#fff" stroke-width="0.3" text-anchor="middle" dominant-baseline="central" textLength="13" lengthAdjust="spacingAndGlyphs">90</text><text x="479.3" y="200.8" transform="rotate(27.0 479.3 200.8)" font-family="Liberation Sans" font-weight="bold" font-size="17" fill="#fff" stroke="#fff" stroke-width="0.3" text-anchor="middle" dominant-baseline="central" textLength="13" lengthAdjust="spacingAndGlyphs">85</text><text x="285.5" y="200.8" transform="rotate(-27.0 285.5 200.8)" font-family="Liberation Sans" font-weight="bold" font-size="17" fill="#fff" stroke="#fff" stroke-width="0.3" text-anchor="middle" dominant-baseline="central" textLength="13" lengthAdjust="spacingAndGlyphs">85</text><text x="507.9" y="218.3" transform="rotate(36.0 507.9 218.3)" font-family="Liberation Sans" font-weight="bold" font-size="17" fill="#fff" stroke="#fff" stroke-width="0.3" text-anchor="middle" dominant-baseline="central" textLength="13" lengthAdjust="spacingAndGlyphs">80</text><text x="256.9" y="218.3" transform="rotate(-36.0 256.9 218.3)" font-family="Liberation Sans" font-weight="bold" font-size="17" fill="#fff" stroke="#fff" stroke-width="0.3" text-anchor="middle" dominant-baseline="central" textLength="13" lengthAdjust="spacingAndGlyphs">80</text><text x="533.4" y="240.0" transform="rotate(45.0 533.4 240.0)" font-family="Liberation Sans" font-weight="bold" font-size="17" fill="#fff" stroke="#fff" stroke-width="0.3" text-anchor="middle" dominant-baseline="central" textLength="13" lengthAdjust="spacingAndGlyphs">75</text><text x="231.4" y="240.0" transform="rotate(-45.0 231.4 240.0)" font-family="Liberation Sans" font-weight="bold" font-size="17" fill="#fff" stroke="#fff" stroke-width="0.3" text-anchor="middle" dominant-baseline="central" textLength="13" lengthAdjust="spacingAndGlyphs">75</text><text x="555.1" y="265.5" transform="rotate(54.0 555.1 265.5)" font-family="Liberation Sans" font-weight="bold" font-size="17" fill="#fff" stroke="#fff" stroke-width="0.3" text-anchor="middle" dominant-baseline="central" textLength="13" lengthAdjust="spacingAndGlyphs">70</text><text x="209.7" y="265.5" transform="rotate(-54.0 209.7 265.5)" font-family="Liberation Sans" font-weight="bold" font-size="17" fill="#fff" stroke="#fff" stroke-width="0.3" text-anchor="middle" dominant-baseline="central" textLength="13" lengthAdjust="spacingAndGlyphs">70</text><text x="572.6" y="294.1" transform="rotate(63.0 572.6 294.1)" font-family="Liberation Sans" font-weight="bold" font-size="17" fill="#fff" stroke="#fff" stroke-width="0.3" text-anchor="middle" dominant-baseline="central" textLength="13" lengthAdjust="spacingAndGlyphs">65</text><text x="192.2" y="294.1" transform="rotate(-63.0 192.2 294.1)" font-family="Liberation Sans" font-weight="bold" font-size="17" fill="#fff" stroke="#fff" stroke-width="0.3" text-anchor="middle" dominant-baseline="central" textLength="13" lengthAdjust="spacingAndGlyphs">65</text><text x="585.5" y="325.0" transform="rotate(72.0 585.5 325.0)" font-family="Liberation Sans" font-weight="bold" font-size="17" fill="#fff" stroke="#fff" stroke-width="0.3" text-anchor="middle" dominant-baseline="central" textLength="13" lengthAdjust="spacingAndGlyphs">60</text><text x="179.3" y="325.0" transform="rotate(-72.0 179.3 325.0)" font-family="Liberation Sans" font-weight="bold" font-size="17" fill="#fff" stroke="#fff" stroke-width="0.3" text-anchor="middle" dominant-baseline="central" textLength="13" lengthAdjust="spacingAndGlyphs">60</text><text x="593.3" y="357.6" transform="rotate(81.0 593.3 357.6)" font-family="Liberation Sans" font-weight="bold" font-size="17" fill="#fff" stroke="#fff" stroke-width="0.3" text-anchor="middle" dominant-baseline="central" textLength="13" lengthAdjust="spacingAndGlyphs">55</text><text x="171.5" y="357.6" transform="rotate(-81.0 171.5 357.6)" font-family="Liberation Sans" font-weight="bold" font-size="17" fill="#fff" stroke="#fff" stroke-width="0.3" text-anchor="middle" dominant-baseline="central" textLength="13" lengthAdjust="spacingAndGlyphs">55</text><text x="595.9" y="391.0" transform="rotate(90.0 595.9 391.0)" font-family="Liberation Sans" font-weight="bold" font-size="17" fill="#fff" stroke="#fff" stroke-width="0.3" text-anchor="middle" dominant-baseline="central" textLength="13" lengthAdjust="spacingAndGlyphs">50</text><text x="168.9" y="391.0" transform="rotate(-90.0 168.9 391.0)" font-family="Liberation Sans" font-weight="bold" font-size="17" fill="#fff" stroke="#fff" stroke-width="0.3" text-anchor="middle" dominant-baseline="central" textLength="13" lengthAdjust="spacingAndGlyphs">50</text><text x="593.3" y="424.4" transform="rotate(99.0 593.3 424.4)" font-family="Liberation Sans" font-weight="bold" font-size="17" fill="#fff" stroke="#fff" stroke-width="0.3" text-anchor="middle" dominant-baseline="central" textLength="13" lengthAdjust="spacingAndGlyphs">45</text><text x="171.5" y="424.4" transform="rotate(-99.0 171.5 424.4)" font-family="Liberation Sans" font-weight="bold" font-size="17" fill="#fff" stroke="#fff" stroke-width="0.3" text-anchor="middle" dominant-baseline="central" textLength="13" lengthAdjust="spacingAndGlyphs">45</text><text x="585.5" y="457.0" transform="rotate(108.0 585.5 457.0)" font-family="Liberation Sans" font-weight="bold" font-size="17" fill="#fff" stroke="#fff" stroke-width="0.3" text-anchor="middle" dominant-baseline="central" textLength="13" lengthAdjust="spacingAndGlyphs">40</text><text x="179.3" y="457.0" transform="rotate(-108.0 179.3 457.0)" font-family="Liberation Sans" font-weight="bold" font-size="17" fill="#fff" stroke="#fff" stroke-width="0.3" text-anchor="middle" dominant-baseline="central" textLength="13" lengthAdjust="spacingAndGlyphs">40</text><text x="340.6" y="202.6" transform="rotate(-12.5 340.6 202.6)" font-size="14" fill="#fff" text-anchor="middle" dominant-baseline="central" letter-spacing="5">多出</text><text x="426.9" y="204.2" transform="rotate(13.4 426.9 204.2)" font-size="14" fill="#fff" text-anchor="middle" dominant-baseline="central" letter-spacing="5">空實</text><text x="190.4" y="380.0" font-size="13" fill="#fff" text-anchor="middle" dominant-baseline="central">多</text><text x="190.4" y="395.0" font-size="13" fill="#fff" text-anchor="middle" dominant-baseline="central">持</text><text x="574.4" y="380.0" font-size="13" fill="#fff" text-anchor="middle" dominant-baseline="central">持</text><text x="574.4" y="395.0" font-size="13" fill="#fff" text-anchor="middle" dominant-baseline="central">空</text><circle cx="382.4" cy="391.0" r="174.4" fill="#fff"/><circle cx="382.4" cy="391.0" r="173.4" fill="none" stroke="#0a8ad6" stroke-width="2.2"/><circle cx="382.4" cy="391.0" r="170" fill="none" stroke="#3a9ae0" stroke-width="1"/><circle cx="382.4" cy="391.0" r="137.0" fill="none" stroke="#aca7a2" stroke-width="17.0"/><circle cx="382.4" cy="391.0" r="138" fill="none" stroke="#8ab8e0" stroke-width="1"/><circle cx="382.4" cy="391.0" r="146.6" fill="none" stroke="#0a8ad6" stroke-width="2.5"/><circle cx="382.4" cy="391.0" r="116.25" fill="none" stroke="#dcd9d5" stroke-width="18.5"/><circle cx="382.4" cy="391.0" r="127" fill="none" stroke="#0a8ad6" stroke-width="3.4"/><circle cx="382.4" cy="391.0" r="97.25" fill="none" stroke="#e0ddda" stroke-width="16.5"/><circle cx="382.4" cy="391.0" r="106.2" fill="none" stroke="#0a8ad6" stroke-width="2.2"/><circle cx="382.4" cy="391.0" r="102.5" fill="none" stroke="#8abce8" stroke-width="1" stroke-dasharray="2 2"/><circle cx="382.4" cy="391.0" r="88.3" fill="none" stroke="#0a8ad6" stroke-width="2.3"/><circle cx="382.4" cy="391.0" r="85.8" fill="none" stroke="#3a9ae0" stroke-width="1.1"/><circle cx="382.4" cy="391.0" r="79.15" fill="none" stroke="#fff" stroke-width="12.299999999999997"/><circle cx="382.4" cy="391.0" r="72.3" fill="none" stroke="#0a8ad6" stroke-width="2"/><circle cx="382.4" cy="391.0" r="69.6" fill="none" stroke="#2a90d8" stroke-width="1.5"/><circle cx="382.4" cy="391.0" r="63.25" fill="none" stroke="#aca7a2" stroke-width="11.5"/><circle cx="382.4" cy="391.0" r="57.8" fill="none" stroke="#0a8ad6" stroke-width="2.8"/><circle cx="382.4" cy="391.0" r="54.8" fill="none" stroke="#3a9ae0" stroke-width="1.3"/><circle cx="382.4" cy="391.0" r="39.85" fill="none" stroke="#dedbd8" stroke-width="28.700000000000003"/><circle cx="382.4" cy="391.0" r="41.5" fill="none" stroke="#0a8ad6" stroke-width="3"/><circle cx="382.4" cy="391.0" r="38.6" fill="none" stroke="#6ab0e8" stroke-width="1.2"/><g transform="rotate(6 382.4 391.0)"><circle cx="382.4" cy="391.0" r="24" fill="#aaa8a6"/><path d="M382.4,367.0 A24,24 0 0 1 382.4,415.0 A12.0,12.0 0 0 1 382.4,391.0 A12.0,12.0 0 0 0 382.4,367.0 Z" fill="#bea264"/></g><circle cx="382.4" cy="391.0" r="24.8" fill="none" stroke="#0a8ad6" stroke-width="2"/><text x="489.7" y="433.7" transform="rotate(-248.3 489.7 433.7)" font-family="Liberation Sans" font-weight="bold" font-size="15" fill="#1c3c82" stroke="#1c3c82" stroke-width="0.5" text-anchor="middle" dominant-baseline="central" textLength="6" lengthAdjust="spacingAndGlyphs">2</text><text x="478.9" y="454.4" transform="rotate(-236.7 478.9 454.4)" font-family="Liberation Sans" font-weight="bold" font-size="15" fill="#1c3c82" stroke="#1c3c82" stroke-width="0.5" text-anchor="middle" dominant-baseline="central" textLength="6" lengthAdjust="spacingAndGlyphs">3</text><text x="464.2" y="472.5" transform="rotate(-225.1 464.2 472.5)" font-family="Liberation Sans" font-weight="bold" font-size="15" fill="#1c3c82" stroke="#1c3c82" stroke-width="0.5" text-anchor="middle" dominant-baseline="central" textLength="6" lengthAdjust="spacingAndGlyphs">4</text><text x="446.1" y="487.3" transform="rotate(-213.5 446.1 487.3)" font-family="Liberation Sans" font-weight="bold" font-size="15" fill="#1c3c82" stroke="#1c3c82" stroke-width="0.5" text-anchor="middle" dominant-baseline="central" textLength="6" lengthAdjust="spacingAndGlyphs">5</text><text x="425.4" y="498.2" transform="rotate(-201.9 425.4 498.2)" font-family="Liberation Sans" font-weight="bold" font-size="15" fill="#1c3c82" stroke="#1c3c82" stroke-width="0.5" text-anchor="middle" dominant-baseline="central" textLength="6" lengthAdjust="spacingAndGlyphs">6</text><text x="403.0" y="504.7" transform="rotate(-190.3 403.0 504.7)" font-family="Liberation Sans" font-weight="bold" font-size="15" fill="#1c3c82" stroke="#1c3c82" stroke-width="0.5" text-anchor="middle" dominant-baseline="central" textLength="6" lengthAdjust="spacingAndGlyphs">7</text><text x="379.7" y="506.5" transform="rotate(-178.6 379.7 506.5)" font-family="Liberation Sans" font-weight="bold" font-size="15" fill="#1c3c82" stroke="#1c3c82" stroke-width="0.5" text-anchor="middle" dominant-baseline="central" textLength="6" lengthAdjust="spacingAndGlyphs">8</text><text x="356.5" y="503.6" transform="rotate(-167.0 356.5 503.6)" font-family="Liberation Sans" font-weight="bold" font-size="15" fill="#1c3c82" stroke="#1c3c82" stroke-width="0.5" text-anchor="middle" dominant-baseline="central" textLength="6" lengthAdjust="spacingAndGlyphs">9</text><text x="334.4" y="496.0" transform="rotate(-155.4 334.4 496.0)" font-family="Liberation Sans" font-weight="bold" font-size="15" fill="#1c3c82" stroke="#1c3c82" stroke-width="0.5" text-anchor="middle" dominant-baseline="central" textLength="11" lengthAdjust="spacingAndGlyphs">10</text><text x="314.2" y="484.2" transform="rotate(-143.8 314.2 484.2)" font-family="Liberation Sans" font-weight="bold" font-size="15" fill="#1c3c82" stroke="#1c3c82" stroke-width="0.5" text-anchor="middle" dominant-baseline="central" textLength="11" lengthAdjust="spacingAndGlyphs">11</text><text x="296.9" y="468.6" transform="rotate(-132.2 296.9 468.6)" font-family="Liberation Sans" font-weight="bold" font-size="15" fill="#1c3c82" stroke="#1c3c82" stroke-width="0.5" text-anchor="middle" dominant-baseline="central" textLength="11" lengthAdjust="spacingAndGlyphs">12</text><text x="283.0" y="449.8" transform="rotate(-120.6 283.0 449.8)" font-family="Liberation Sans" font-weight="bold" font-size="15" fill="#1c3c82" stroke="#1c3c82" stroke-width="0.5" text-anchor="middle" dominant-baseline="central" textLength="11" lengthAdjust="spacingAndGlyphs">13</text><text x="273.2" y="428.6" transform="rotate(-109.0 273.2 428.6)" font-family="Liberation Sans" font-weight="bold" font-size="15" fill="#1c3c82" stroke="#1c3c82" stroke-width="0.5" text-anchor="middle" dominant-baseline="central" textLength="11" lengthAdjust="spacingAndGlyphs">14</text><text x="267.9" y="405.8" transform="rotate(-97.4 267.9 405.8)" font-family="Liberation Sans" font-weight="bold" font-size="15" fill="#1c3c82" stroke="#1c3c82" stroke-width="0.5" text-anchor="middle" dominant-baseline="central" textLength="11" lengthAdjust="spacingAndGlyphs">15</text><text x="267.2" y="382.5" transform="rotate(-85.8 267.2 382.5)" font-family="Liberation Sans" font-weight="bold" font-size="15" fill="#1c3c82" stroke="#1c3c82" stroke-width="0.5" text-anchor="middle" dominant-baseline="central" textLength="11" lengthAdjust="spacingAndGlyphs">16</text><text x="271.3" y="359.5" transform="rotate(-74.2 271.3 359.5)" font-family="Liberation Sans" font-weight="bold" font-size="15" fill="#1c3c82" stroke="#1c3c82" stroke-width="0.5" text-anchor="middle" dominant-baseline="central" textLength="11" lengthAdjust="spacingAndGlyphs">17</text><text x="279.9" y="337.8" transform="rotate(-62.5 279.9 337.8)" font-family="Liberation Sans" font-weight="bold" font-size="15" fill="#1c3c82" stroke="#1c3c82" stroke-width="0.5" text-anchor="middle" dominant-baseline="central" textLength="11" lengthAdjust="spacingAndGlyphs">18</text><text x="292.7" y="318.2" transform="rotate(-50.9 292.7 318.2)" font-family="Liberation Sans" font-weight="bold" font-size="15" fill="#1c3c82" stroke="#1c3c82" stroke-width="0.5" text-anchor="middle" dominant-baseline="central" textLength="11" lengthAdjust="spacingAndGlyphs">19</text><text x="309.2" y="301.7" transform="rotate(-39.3 309.2 301.7)" font-family="Liberation Sans" font-weight="bold" font-size="15" fill="#1c3c82" stroke="#1c3c82" stroke-width="0.5" text-anchor="middle" dominant-baseline="central" textLength="11" lengthAdjust="spacingAndGlyphs">20</text><text x="328.7" y="288.8" transform="rotate(-27.7 328.7 288.8)" font-family="Liberation Sans" font-weight="bold" font-size="15" fill="#1c3c82" stroke="#1c3c82" stroke-width="0.5" text-anchor="middle" dominant-baseline="central" textLength="11" lengthAdjust="spacingAndGlyphs">21</text><text x="350.4" y="280.0" transform="rotate(-16.1 350.4 280.0)" font-family="Liberation Sans" font-weight="bold" font-size="15" fill="#1c3c82" stroke="#1c3c82" stroke-width="0.5" text-anchor="middle" dominant-baseline="central" textLength="11" lengthAdjust="spacingAndGlyphs">22</text><text x="373.3" y="275.9" transform="rotate(-4.5 373.3 275.9)" font-family="Liberation Sans" font-weight="bold" font-size="15" fill="#1c3c82" stroke="#1c3c82" stroke-width="0.5" text-anchor="middle" dominant-baseline="central" textLength="11" lengthAdjust="spacingAndGlyphs">23</text><text x="396.7" y="276.4" transform="rotate(7.1 396.7 276.4)" font-family="Liberation Sans" font-weight="bold" font-size="15" fill="#1c3c82" stroke="#1c3c82" stroke-width="0.5" text-anchor="middle" dominant-baseline="central" textLength="11" lengthAdjust="spacingAndGlyphs">24</text><text x="419.5" y="281.6" transform="rotate(18.7 419.5 281.6)" font-family="Liberation Sans" font-weight="bold" font-size="15" fill="#1c3c82" stroke="#1c3c82" stroke-width="0.5" text-anchor="middle" dominant-baseline="central" textLength="11" lengthAdjust="spacingAndGlyphs">25</text><text x="440.7" y="291.3" transform="rotate(30.3 440.7 291.3)" font-family="Liberation Sans" font-weight="bold" font-size="15" fill="#1c3c82" stroke="#1c3c82" stroke-width="0.5" text-anchor="middle" dominant-baseline="central" textLength="11" lengthAdjust="spacingAndGlyphs">26</text><text x="459.6" y="305.1" transform="rotate(41.9 459.6 305.1)" font-family="Liberation Sans" font-weight="bold" font-size="15" fill="#1c3c82" stroke="#1c3c82" stroke-width="0.5" text-anchor="middle" dominant-baseline="central" textLength="11" lengthAdjust="spacingAndGlyphs">27</text><text x="475.3" y="322.4" transform="rotate(53.5 475.3 322.4)" font-family="Liberation Sans" font-weight="bold" font-size="15" fill="#1c3c82" stroke="#1c3c82" stroke-width="0.5" text-anchor="middle" dominant-baseline="central" textLength="11" lengthAdjust="spacingAndGlyphs">28</text><text x="487.2" y="342.5" transform="rotate(65.2 487.2 342.5)" font-family="Liberation Sans" font-weight="bold" font-size="15" fill="#1c3c82" stroke="#1c3c82" stroke-width="0.5" text-anchor="middle" dominant-baseline="central" textLength="11" lengthAdjust="spacingAndGlyphs">29</text><text x="494.8" y="364.6" transform="rotate(76.8 494.8 364.6)" font-family="Liberation Sans" font-weight="bold" font-size="15" fill="#1c3c82" stroke="#1c3c82" stroke-width="0.5" text-anchor="middle" dominant-baseline="central" textLength="11" lengthAdjust="spacingAndGlyphs">30</text><text x="497.9" y="387.7" transform="rotate(88.4 497.9 387.7)" font-family="Liberation Sans" font-weight="bold" font-size="15" fill="#1c3c82" stroke="#1c3c82" stroke-width="0.5" text-anchor="middle" dominant-baseline="central" textLength="11" lengthAdjust="spacingAndGlyphs">31</text><text x="533.0" y="334.1" transform="rotate(-290.7 533.0 334.1)" font-family="Liberation Sans" font-weight="bold" font-style="italic" font-size="13" fill="#1c3c82" stroke="#1c3c82" stroke-width="0.3" text-anchor="middle" dominant-baseline="central" textLength="6" lengthAdjust="spacingAndGlyphs">1</text><text x="541.3" y="417.0" transform="rotate(-260.7 541.3 417.0)" font-family="Liberation Sans" font-weight="bold" font-style="italic" font-size="13" fill="#1c3c82" stroke="#1c3c82" stroke-width="0.3" text-anchor="middle" dominant-baseline="central" textLength="6" lengthAdjust="spacingAndGlyphs">2</text><text x="507.0" y="493.0" transform="rotate(-230.7 507.0 493.0)" font-family="Liberation Sans" font-weight="bold" font-style="italic" font-size="13" fill="#1c3c82" stroke="#1c3c82" stroke-width="0.3" text-anchor="middle" dominant-baseline="central" textLength="6" lengthAdjust="spacingAndGlyphs">3</text><text x="439.3" y="541.6" transform="rotate(-200.7 439.3 541.6)" font-family="Liberation Sans" font-weight="bold" font-style="italic" font-size="13" fill="#1c3c82" stroke="#1c3c82" stroke-width="0.3" text-anchor="middle" dominant-baseline="central" textLength="6" lengthAdjust="spacingAndGlyphs">4</text><text x="356.4" y="549.9" transform="rotate(-170.7 356.4 549.9)" font-family="Liberation Sans" font-weight="bold" font-style="italic" font-size="13" fill="#1c3c82" stroke="#1c3c82" stroke-width="0.3" text-anchor="middle" dominant-baseline="central" textLength="6" lengthAdjust="spacingAndGlyphs">5</text><text x="280.4" y="515.6" transform="rotate(-140.7 280.4 515.6)" font-family="Liberation Sans" font-weight="bold" font-style="italic" font-size="13" fill="#1c3c82" stroke="#1c3c82" stroke-width="0.3" text-anchor="middle" dominant-baseline="central" textLength="6" lengthAdjust="spacingAndGlyphs">6</text><text x="231.8" y="447.9" transform="rotate(-110.7 231.8 447.9)" font-family="Liberation Sans" font-weight="bold" font-style="italic" font-size="13" fill="#1c3c82" stroke="#1c3c82" stroke-width="0.3" text-anchor="middle" dominant-baseline="central" textLength="6" lengthAdjust="spacingAndGlyphs">7</text><text x="257.8" y="289.0" transform="rotate(-50.7 257.8 289.0)" font-family="Liberation Sans" font-weight="bold" font-style="italic" font-size="13" fill="#1c3c82" stroke="#1c3c82" stroke-width="0.3" text-anchor="middle" dominant-baseline="central" textLength="6" lengthAdjust="spacingAndGlyphs">9</text><text x="325.5" y="240.4" transform="rotate(-20.7 325.5 240.4)" font-family="Liberation Sans" font-weight="bold" font-style="italic" font-size="13" fill="#1c3c82" stroke="#1c3c82" stroke-width="0.3" text-anchor="middle" dominant-baseline="central" textLength="10" lengthAdjust="spacingAndGlyphs">10</text><text x="408.4" y="232.1" transform="rotate(9.3 408.4 232.1)" font-family="Liberation Sans" font-weight="bold" font-style="italic" font-size="13" fill="#1c3c82" stroke="#1c3c82" stroke-width="0.3" text-anchor="middle" dominant-baseline="central" textLength="10" lengthAdjust="spacingAndGlyphs">11</text><text x="484.4" y="266.4" transform="rotate(39.3 484.4 266.4)" font-family="Liberation Sans" font-weight="bold" font-style="italic" font-size="13" fill="#1c3c82" stroke="#1c3c82" stroke-width="0.3" text-anchor="middle" dominant-baseline="central" textLength="10" lengthAdjust="spacingAndGlyphs">12</text><text x="517.7" y="412.4" transform="rotate(-261.0 517.7 412.4)" font-family="Liberation Sans" font-weight="bold" font-style="italic" font-size="14" fill="#1c3c82" stroke="#1c3c82" stroke-width="0.3" text-anchor="middle" dominant-baseline="central" textLength="7" lengthAdjust="spacingAndGlyphs">1</text><text x="403.8" y="526.3" transform="rotate(-189.0 403.8 526.3)" font-family="Liberation Sans" font-weight="bold" font-style="italic" font-size="14" fill="#1c3c82" stroke="#1c3c82" stroke-width="0.3" text-anchor="middle" dominant-baseline="central" textLength="7" lengthAdjust="spacingAndGlyphs">2</text><text x="260.3" y="453.2" transform="rotate(-117.0 260.3 453.2)" font-family="Liberation Sans" font-weight="bold" font-style="italic" font-size="14" fill="#1c3c82" stroke="#1c3c82" stroke-width="0.3" text-anchor="middle" dominant-baseline="central" textLength="7" lengthAdjust="spacingAndGlyphs">3</text><text x="285.5" y="294.1" transform="rotate(-45.0 285.5 294.1)" font-family="Liberation Sans" font-weight="bold" font-style="italic" font-size="14" fill="#1c3c82" stroke="#1c3c82" stroke-width="0.3" text-anchor="middle" dominant-baseline="central" textLength="7" lengthAdjust="spacingAndGlyphs">4</text><text x="444.6" y="268.9" transform="rotate(27.0 444.6 268.9)" font-family="Liberation Sans" font-weight="bold" font-style="italic" font-size="14" fill="#1c3c82" stroke="#1c3c82" stroke-width="0.3" text-anchor="middle" dominant-baseline="central" textLength="7" lengthAdjust="spacingAndGlyphs">5</text><text x="287.3" y="372.0" transform="rotate(-78.7 287.3 372.0)" font-family="Liberation Sans" font-weight="bold" font-size="14" fill="#1c3c82" stroke="#1c3c82" stroke-width="0.3" text-anchor="middle" dominant-baseline="central">5<tspan font-size="7" stroke-width="0">7</tspan></text><text x="309.5" y="327.0" transform="rotate(-48.7 309.5 327.0)" font-family="Liberation Sans" font-weight="bold" font-size="14" fill="#1c3c82" stroke="#1c3c82" stroke-width="0.3" text-anchor="middle" dominant-baseline="central">6<tspan font-size="7" stroke-width="0">10</tspan></text><text x="351.3" y="299.1" transform="rotate(-18.7 351.3 299.1)" font-family="Liberation Sans" font-weight="bold" font-size="14" fill="#1c3c82" stroke="#1c3c82" stroke-width="0.3" text-anchor="middle" dominant-baseline="central">7<tspan font-size="7" stroke-width="0">8</tspan></text><text x="401.4" y="295.9" transform="rotate(11.3 401.4 295.9)" font-family="Liberation Sans" font-weight="bold" font-size="14" fill="#1c3c82" stroke="#1c3c82" stroke-width="0.3" text-anchor="middle" dominant-baseline="central">8<tspan font-size="7" stroke-width="0">9</tspan></text><text x="446.4" y="318.1" transform="rotate(41.3 446.4 318.1)" font-family="Liberation Sans" font-weight="bold" font-size="14" fill="#1c3c82" stroke="#1c3c82" stroke-width="0.3" text-anchor="middle" dominant-baseline="central">9<tspan font-size="7" stroke-width="0">7</tspan></text><text x="474.3" y="359.9" transform="rotate(71.3 474.3 359.9)" font-family="Liberation Sans" font-weight="bold" font-size="14" fill="#1c3c82" stroke="#1c3c82" stroke-width="0.3" text-anchor="middle" dominant-baseline="central">10<tspan font-size="7" stroke-width="0">24</tspan></text><text x="477.5" y="410.0" transform="rotate(101.3 477.5 410.0)" font-family="Liberation Sans" font-weight="bold" font-size="14" fill="#1c3c82" stroke="#1c3c82" stroke-width="0.3" text-anchor="middle" dominant-baseline="central">11<tspan font-size="7" stroke-width="0">7</tspan></text><text x="455.3" y="455.0" transform="rotate(131.3 455.3 455.0)" font-family="Liberation Sans" font-weight="bold" font-size="14" fill="#1c3c82" stroke="#1c3c82" stroke-width="0.3" text-anchor="middle" dominant-baseline="central">12<tspan font-size="7" stroke-width="0">7</tspan></text><text x="413.5" y="482.9" transform="rotate(161.3 413.5 482.9)" font-family="Liberation Sans" font-weight="bold" font-size="14" fill="#1c3c82" stroke="#1c3c82" stroke-width="0.3" text-anchor="middle" dominant-baseline="central">1<tspan font-size="7" stroke-width="0">5</tspan></text><text x="363.4" y="486.1" transform="rotate(191.3 363.4 486.1)" font-family="Liberation Sans" font-weight="bold" font-size="14" fill="#1c3c82" stroke="#1c3c82" stroke-width="0.3" text-anchor="middle" dominant-baseline="central">2<tspan font-size="7" stroke-width="0">4</tspan></text><text x="318.4" y="463.9" transform="rotate(221.3 318.4 463.9)" font-family="Liberation Sans" font-weight="bold" font-size="14" fill="#1c3c82" stroke="#1c3c82" stroke-width="0.3" text-anchor="middle" dominant-baseline="central">3<tspan font-size="7" stroke-width="0">5</tspan></text><text x="290.5" y="422.1" transform="rotate(251.3 290.5 422.1)" font-family="Liberation Sans" font-weight="bold" font-size="14" fill="#1c3c82" stroke="#1c3c82" stroke-width="0.3" text-anchor="middle" dominant-baseline="central">4<tspan font-size="7" stroke-width="0">5</tspan></text><text x="319.0" y="130.2" font-family="Liberation Sans" font-weight="bold" font-size="18" fill="#111" stroke="#111" stroke-width="0.6" text-anchor="middle" dominant-baseline="central" textLength="8.1" lengthAdjust="spacingAndGlyphs">8</text><text x="273.4" y="147.9" font-family="Liberation Sans" font-weight="bold" font-size="18" fill="#111" stroke="#111" stroke-width="0.6" text-anchor="middle" dominant-baseline="central" textLength="8.1" lengthAdjust="spacingAndGlyphs">8</text><text x="235.2" y="169.9" font-family="Liberation Sans" font-weight="bold" font-size="13" fill="#111" stroke="#111" stroke-width="0.6" text-anchor="middle" dominant-baseline="central" textLength="5.9" lengthAdjust="spacingAndGlyphs">8</text><text x="503.2" y="153.5" font-family="Liberation Sans" font-weight="bold" font-size="17" fill="#111" stroke="#111" stroke-width="0.6" text-anchor="middle" dominant-baseline="central" textLength="7.7" lengthAdjust="spacingAndGlyphs">5</text><text x="552.3" y="185.8" font-family="Liberation Sans" font-weight="bold" font-size="17" fill="#111" stroke="#111" stroke-width="0.6" text-anchor="middle" dominant-baseline="central" textLength="7.7" lengthAdjust="spacingAndGlyphs">6</text><text x="620.5" y="272.8" font-family="Liberation Sans" font-weight="bold" font-size="19" fill="#111" stroke="#111" stroke-width="0.6" text-anchor="middle" dominant-baseline="central" textLength="8.6" lengthAdjust="spacingAndGlyphs">7</text><circle cx="303.3" cy="378.3" r="5.3" fill="#f4f4f4" stroke="#8a8a8a" stroke-width="1.6" stroke-dasharray="1.5 1"/><circle cx="303.3" cy="378.3" r="3.4" fill="#1a9ae0"/><circle cx="318.3" cy="381" r="5.3" fill="#f4f4f4" stroke="#8a8a8a" stroke-width="1.6" stroke-dasharray="1.5 1"/><circle cx="318.3" cy="381" r="3.4" fill="#1a0a70"/><circle cx="333.3" cy="384" r="5.3" fill="#f4f4f4" stroke="#8a8a8a" stroke-width="1.6" stroke-dasharray="1.5 1"/><circle cx="333.3" cy="384" r="3.4" fill="#8a1a80"/><circle cx="414.3" cy="395.7" r="5.3" fill="#f4f4f4" stroke="#8a8a8a" stroke-width="1.6" stroke-dasharray="1.5 1"/><circle cx="414.3" cy="395.7" r="3.4" fill="#e0107a"/><circle cx="479" cy="406.3" r="5.3" fill="#f4f4f4" stroke="#8a8a8a" stroke-width="1.6" stroke-dasharray="1.5 1"/><circle cx="479" cy="406.3" r="3.4" fill="#109030"/><circle cx="499.2" cy="409" r="5.3" fill="#f4f4f4" stroke="#8a8a8a" stroke-width="1.6" stroke-dasharray="1.5 1"/><circle cx="499.2" cy="409" r="3.4" fill="#ffee00"/><circle cx="518.7" cy="412.5" r="5.3" fill="#f4f4f4" stroke="#8a8a8a" stroke-width="1.6" stroke-dasharray="1.5 1"/><circle cx="518.7" cy="412.5" r="3.4" fill="#f07010"/><circle cx="220.2" cy="365.2" r="5.3" fill="#f4f4f4" stroke="#8a8a8a" stroke-width="1.6" stroke-dasharray="1.5 1"/><circle cx="220.2" cy="365.2" r="3.4" fill="#e0106a"/><line x1="108" y1="391.5" x2="655" y2="391.5" stroke="#e00000" stroke-width="1" stroke-dasharray="1 1"/><line x1="381.5" y1="118" x2="381.5" y2="473" stroke="#e00000" stroke-width="1" stroke-dasharray="1 1"/></g></svg>
<div class="t" style="left:118px;top:128px;color:#000;font-size:12.5px">紅黑值</div>
<div style="position:absolute;left:0px;top:473px;width:900px;height:178px;background:#d4d0c8;border-top:1px solid #d4d0c8;box-shadow:inset 0 1px 0 #fff"></div>
<div style="position:absolute;left:3px;top:476px;width:897px;height:16px;background:linear-gradient(to right,#0a246a 0%,#0a246a 15%,#a6caf0 100%)"></div>
<svg style="position:absolute;left:6px;top:478px" width="14" height="13" viewBox="0 0 14 13"><ellipse cx="7" cy="7" rx="6" ry="5" fill="#303030"/><ellipse cx="8.5" cy="4.5" rx="3.5" ry="2.8" fill="#e8e8e8"/><path d="M2 12l3-2" stroke="#000" stroke-width="2"/></svg>
<div class="t" style="left:21px;top:478px;color:#fff;font-size:13px;letter-spacing:1px;transform:scaleY(1.05);-webkit-text-stroke:0.2px #fff">強弱跟蹤</div>
<div class="rb" style="position:absolute;left:854px;top:478px;width:14px;height:13px"></div>
<div style="position:absolute;left:858px;top:486px;width:6px;height:2px;background:#000"></div>
<div class="rb" style="position:absolute;left:868px;top:478px;width:15px;height:13px"></div>
<svg style="position:absolute;left:871px;top:480px" width="9" height="9" viewBox="0 0 9 9"><path d="M0.5 0.5h8v8h-8z M0.5 1.5h8" fill="none" stroke="#000" stroke-width="1"/></svg>
<div class="rb" style="position:absolute;left:884px;top:478px;width:15px;height:13px"></div>
<svg style="position:absolute;left:887px;top:480px" width="9" height="8" viewBox="0 0 9 8"><path d="M1 0.5L8 7.5M8 0.5L1 7.5" stroke="#000" stroke-width="1.6"/></svg>
<div class="t" style="left:5px;top:497px;color:#000;font-size:13px;letter-spacing:1px">當日新高</div>
<div class="t" style="left:66px;top:497px;color:#000;font-size:13px">：</div>
<div class="t" style="left:82px;top:496px;color:#000;font-family:Liberation Sans,sans-serif;font-size:12px;letter-spacing:0.33px;transform:scaleY(1.15);transform-origin:0 0">395</div>
<div class="t" style="left:111px;top:497px;color:#000;font-size:13px">只</div>
<div class="t" style="left:5px;top:636px;color:#000;font-size:13px;letter-spacing:1px">領先大盤</div>
<div class="t" style="left:66px;top:636px;color:#000;font-size:13px">：</div>
<div class="t" style="left:82px;top:635px;color:#000;font-family:Liberation Sans,sans-serif;font-size:12px;letter-spacing:0.33px;transform:scaleY(1.15);transform-origin:0 0">557</div>
<div class="t" style="left:111px;top:636px;color:#000;font-size:13px">只</div>
<div style="position:absolute;left:5px;top:511px;width:295px;height:120px;border-top:1px solid #808080;border-left:1px solid #808080;border-right:1px solid #fff;border-bottom:1px solid #fff;overflow:hidden"><div style="position:absolute;left:0;top:0;right:0;bottom:0;border-top:1px solid #404040;border-left:1px solid #404040;border-right:1px solid #d4d0c8;border-bottom:1px solid #d4d0c8;background:#000;overflow:hidden">
<div style="position:absolute;left:0;top:1px;width:275px;height:14px;background:#d4d0c8"></div>
<div class="t" style="right:246px;top:1px;color:#000;font-family:Liberation Sans,sans-serif;font-size:12px;letter-spacing:0.33px;transform:scaleY(1.15);transform-origin:0 0">212</div>
<div class="t" style="right:182px;top:2px;color:#000;font-size:13px"><span style="display:inline-block;width:14px;text-align:center">汽</span><span style="display:inline-block;width:7px"></span><span style="display:inline-block;width:14px;text-align:center">車</span><span style="display:inline-block;width:7px"></span><span style="display:inline-block;width:14px;text-align:center">類</span></div>
<div class="t" style="right:127px;top:1px;color:#000;font-family:Liberation Sans,sans-serif;font-size:12px;letter-spacing:0.33px;transform:scaleY(1.15);transform-origin:0 0">130.84</div>
<div class="t" style="right:62px;top:1px;color:#000;font-family:Liberation Sans,sans-serif;font-size:12px;letter-spacing:0.33px;transform:scaleY(1.15);transform-origin:0 0">130.84%</div>
<div class="t" style="right:246px;top:15px;color:#ff5050;font-family:Liberation Sans,sans-serif;font-size:12px;letter-spacing:0.33px;transform:scaleY(1.15);transform-origin:0 0">6177</div>
<div class="t" style="right:182px;top:16px;color:#ff5050;font-size:13px"><span style="display:inline-block;width:14px;text-align:center">十</span><span style="display:inline-block;width:14px"></span><span style="display:inline-block;width:14px;text-align:center">至</span></div>
<div class="t" style="right:127px;top:15px;color:#ff5050;font-family:Liberation Sans,sans-serif;font-size:12px;letter-spacing:0.33px;transform:scaleY(1.15);transform-origin:0 0">16.00</div>
<div class="t" style="right:62px;top:15px;color:#ff5050;font-family:Liberation Sans,sans-serif;font-size:12px;letter-spacing:0.33px;transform:scaleY(1.15);transform-origin:0 0">16.00%</div>
<div class="t" style="right:246px;top:29px;color:#00ffff;font-family:Liberation Sans,sans-serif;font-size:12px;letter-spacing:0.33px;transform:scaleY(1.15);transform-origin:0 0">03158</div>
<div class="t" style="right:182px;top:30px;color:#00ffff;font-size:13px"><span style="display:inline-block;width:14px;text-align:center">元</span><span style="display:inline-block;width:14px;text-align:center">京</span><span style="display:inline-block;width:7px;font-family:Liberation Sans,sans-serif;font-size:12px;transform:scaleY(1.15);vertical-align:top;margin-top:1px">6</span><span style="display:inline-block;width:7px;font-family:Liberation Sans,sans-serif;font-size:12px;transform:scaleY(1.15);vertical-align:top;margin-top:1px">6</span></div>
<div class="t" style="right:127px;top:29px;color:#00ffff;font-family:Liberation Sans,sans-serif;font-size:12px;letter-spacing:0.33px;transform:scaleY(1.15);transform-origin:0 0">2.03</div>
<div class="t" style="right:62px;top:29px;color:#00ffff;font-family:Liberation Sans,sans-serif;font-size:12px;letter-spacing:0.33px;transform:scaleY(1.15);transform-origin:0 0">2.03%</div>
<div class="t" style="right:246px;top:43px;color:#ff5050;font-family:Liberation Sans,sans-serif;font-size:12px;letter-spacing:0.33px;transform:scaleY(1.15);transform-origin:0 0">6146</div>
<div class="t" style="right:182px;top:44px;color:#ff5050;font-size:13px"><span style="display:inline-block;width:14px;text-align:center">耕</span><span style="display:inline-block;width:14px"></span><span style="display:inline-block;width:14px;text-align:center">興</span></div>
<div class="t" style="right:127px;top:43px;color:#ff5050;font-family:Liberation Sans,sans-serif;font-size:12px;letter-spacing:0.33px;transform:scaleY(1.15);transform-origin:0 0">60.50</div>
<div class="t" style="right:62px;top:43px;color:#ff5050;font-family:Liberation Sans,sans-serif;font-size:12px;letter-spacing:0.33px;transform:scaleY(1.15);transform-origin:0 0">60.50%</div>
<div class="t" style="right:246px;top:57px;color:#00ffff;font-family:Liberation Sans,sans-serif;font-size:12px;letter-spacing:0.33px;transform:scaleY(1.15);transform-origin:0 0">5310</div>
<div class="t" style="right:182px;top:58px;color:#00ffff;font-size:13px"><span style="display:inline-block;width:14px;text-align:center">天</span><span style="display:inline-block;width:14px"></span><span style="display:inline-block;width:14px;text-align:center">剛</span></div>
<div class="t" style="right:127px;top:57px;color:#00ffff;font-family:Liberation Sans,sans-serif;font-size:12px;letter-spacing:0.33px;transform:scaleY(1.15);transform-origin:0 0">3.05</div>
<div class="t" style="right:62px;top:57px;color:#00ffff;font-family:Liberation Sans,sans-serif;font-size:12px;letter-spacing:0.33px;transform:scaleY(1.15);transform-origin:0 0">3.05%</div>
<div class="t" style="right:246px;top:71px;color:#ff5050;font-family:Liberation Sans,sans-serif;font-size:12px;letter-spacing:0.33px;transform:scaleY(1.15);transform-origin:0 0">1516</div>
<div class="t" style="right:182px;top:72px;color:#ff5050;font-size:13px"><span style="display:inline-block;width:14px;text-align:center">川</span><span style="display:inline-block;width:14px"></span><span style="display:inline-block;width:14px;text-align:center">飛</span></div>
<div class="t" style="right:127px;top:71px;color:#ff5050;font-family:Liberation Sans,sans-serif;font-size:12px;letter-spacing:0.33px;transform:scaleY(1.15);transform-origin:0 0">4.24</div>
<div class="t" style="right:62px;top:71px;color:#ff5050;font-family:Liberation Sans,sans-serif;font-size:12px;letter-spacing:0.33px;transform:scaleY(1.15);transform-origin:0 0">4.24%</div>
<div class="t" style="right:246px;top:85px;color:#ff5050;font-family:Liberation Sans,sans-serif;font-size:12px;letter-spacing:0.33px;transform:scaleY(1.15);transform-origin:0 0">2707</div>
<div class="t" style="right:182px;top:86px;color:#ff5050;font-size:13px"><span style="display:inline-block;width:14px;text-align:center">晶</span><span style="display:inline-block;width:14px"></span><span style="display:inline-block;width:14px;text-align:center">華</span></div>
<div class="t" style="right:127px;top:85px;color:#ff5050;font-family:Liberation Sans,sans-serif;font-size:12px;letter-spacing:0.33px;transform:scaleY(1.15);transform-origin:0 0">55.10</div>
<div class="t" style="right:62px;top:85px;color:#ff5050;font-family:Liberation Sans,sans-serif;font-size:12px;letter-spacing:0.33px;transform:scaleY(1.15);transform-origin:0 0">55.10%</div>
<div class="t" style="right:246px;top:99px;color:#ff5050;font-family:Liberation Sans,sans-serif;font-size:12px;letter-spacing:0.33px;transform:scaleY(1.15);transform-origin:0 0">24172</div>
<div class="t" style="right:182px;top:100px;color:#ff5050;font-size:13px"><span style="display:inline-block;width:14px;text-align:center">圓</span><span style="display:inline-block;width:14px;text-align:center">剛</span><span style="display:inline-block;width:14px;text-align:center">二</span></div>
<div class="t" style="right:127px;top:99px;color:#ff5050;font-family:Liberation Sans,sans-serif;font-size:12px;letter-spacing:0.33px;transform:scaleY(1.15);transform-origin:0 0">123.00</div>
<div class="t" style="right:62px;top:99px;color:#ff5050;font-family:Liberation Sans,sans-serif;font-size:12px;letter-spacing:0.33px;transform:scaleY(1.15);transform-origin:0 0">123.00%</div>
<div class="t" style="right:246px;top:113px;color:#ff5050;font-family:Liberation Sans,sans-serif;font-size:12px;letter-spacing:0.33px;transform:scaleY(1.15);transform-origin:0 0">2350</div>
<div class="t" style="right:182px;top:114px;color:#ff5050;font-size:13px"><span style="display:inline-block;width:14px;text-align:center">環</span><span style="display:inline-block;width:14px"></span><span style="display:inline-block;width:14px;text-align:center">電</span></div>
<div class="t" style="right:127px;top:113px;color:#ff5050;font-family:Liberation Sans,sans-serif;font-size:12px;letter-spacing:0.33px;transform:scaleY(1.15);transform-origin:0 0">12.20</div>
<div class="t" style="right:62px;top:113px;color:#ff5050;font-family:Liberation Sans,sans-serif;font-size:12px;letter-spacing:0.33px;transform:scaleY(1.15);transform-origin:0 0">12.20%</div>
<div style="position:absolute;right:0;top:0;width:16px;bottom:0;background:repeating-conic-gradient(#d4d0c8 0 25%,#fff 0 50%) 0 0/2px 2px"></div>
<div class="rb" style="position:absolute;right:0;top:0;width:16px;height:14px"></div>
<svg style="position:absolute;right:5px;top:5px" width="7" height="4" viewBox="0 0 7 4"><path d="M0 4h7L3.5 0z" fill="#000"/></svg>
<div class="rb" style="position:absolute;right:0;top:14px;width:16px;height:9px"></div>
<div class="rb" style="position:absolute;right:0;bottom:0;width:16px;height:15px"></div>
<svg style="position:absolute;right:5px;bottom:6px" width="7" height="4" viewBox="0 0 7 4"><path d="M0 0h7L3.5 4z" fill="#000"/></svg>
</div></div>
<div class="t" style="left:303px;top:497px;color:#000;font-size:13px;letter-spacing:1px">大筆成交</div>
<div class="t" style="left:364px;top:497px;color:#000;font-size:13px">：</div>
<div class="t" style="left:380px;top:496px;color:#000;font-family:Liberation Sans,sans-serif;font-size:12px;letter-spacing:0.33px;transform:scaleY(1.15);transform-origin:0 0">102</div>
<div class="t" style="left:409px;top:497px;color:#000;font-size:13px">只</div>
<div class="t" style="left:303px;top:636px;color:#000;font-size:13px;letter-spacing:1px">同步大盤</div>
<div class="t" style="left:364px;top:636px;color:#000;font-size:13px">：</div>
<div class="t" style="left:380px;top:635px;color:#000;font-family:Liberation Sans,sans-serif;font-size:12px;letter-spacing:0.33px;transform:scaleY(1.15);transform-origin:0 0">15</div>
<div class="t" style="left:409px;top:636px;color:#000;font-size:13px">只</div>
<div style="position:absolute;left:303px;top:511px;width:295px;height:120px;border-top:1px solid #808080;border-left:1px solid #808080;border-right:1px solid #fff;border-bottom:1px solid #fff;overflow:hidden"><div style="position:absolute;left:0;top:0;right:0;bottom:0;border-top:1px solid #404040;border-left:1px solid #404040;border-right:1px solid #d4d0c8;border-bottom:1px solid #d4d0c8;background:#000;overflow:hidden">
<div class="t" style="right:246px;top:1px;color:#ff5050;font-family:Liberation Sans,sans-serif;font-size:12px;letter-spacing:0.33px;transform:scaleY(1.15);transform-origin:0 0">400</div>
<div class="t" style="right:182px;top:2px;color:#ff5050;font-size:13px"><span style="display:inline-block;width:14px;text-align:center">櫃</span><span style="display:inline-block;width:14px;text-align:center">台</span><span style="display:inline-block;width:14px;text-align:center">指</span><span style="display:inline-block;width:14px;text-align:center">數</span></div>
<div class="t" style="right:127px;top:1px;color:#ff5050;font-family:Liberation Sans,sans-serif;font-size:12px;letter-spacing:0.33px;transform:scaleY(1.15);transform-origin:0 0">129.10</div>
<div class="t" style="right:70px;top:1px;color:#ff5050;font-family:Liberation Sans,sans-serif;font-size:12px;letter-spacing:0.33px;transform:scaleY(1.15);transform-origin:0 0">1513</div>
<div class="t" style="right:246px;top:15px;color:#00ffff;font-family:Liberation Sans,sans-serif;font-size:12px;letter-spacing:0.33px;transform:scaleY(1.15);transform-origin:0 0">102</div>
<div class="t" style="right:182px;top:16px;color:#00ffff;font-size:13px"><span style="display:inline-block;width:14px;text-align:center">工</span><span style="display:inline-block;width:14px;text-align:center">業</span><span style="display:inline-block;width:14px;text-align:center">平</span><span style="display:inline-block;width:14px;text-align:center">均</span></div>
<div class="t" style="right:127px;top:15px;color:#00ffff;font-family:Liberation Sans,sans-serif;font-size:12px;letter-spacing:0.33px;transform:scaleY(1.15);transform-origin:0 0">187.28</div>
<div class="t" style="right:70px;top:15px;color:#00ffff;font-family:Liberation Sans,sans-serif;font-size:12px;letter-spacing:0.33px;transform:scaleY(1.15);transform-origin:0 0">5961</div>
<div class="t" style="right:246px;top:29px;color:#ff5050;font-family:Liberation Sans,sans-serif;font-size:12px;letter-spacing:0.33px;transform:scaleY(1.15);transform-origin:0 0">101</div>
<div class="t" style="right:182px;top:30px;color:#ff5050;font-size:13px"><span style="display:inline-block;width:14px;text-align:center">綜</span><span style="display:inline-block;width:14px;text-align:center">合</span><span style="display:inline-block;width:14px;text-align:center">平</span><span style="display:inline-block;width:14px;text-align:center">均</span></div>
<div class="t" style="right:127px;top:29px;color:#ff5050;font-family:Liberation Sans,sans-serif;font-size:12px;letter-spacing:0.33px;transform:scaleY(1.15);transform-origin:0 0">163.64</div>
<div class="t" style="right:70px;top:29px;color:#ff5050;font-family:Liberation Sans,sans-serif;font-size:12px;letter-spacing:0.33px;transform:scaleY(1.15);transform-origin:0 0">5961</div>
<div class="t" style="right:246px;top:43px;color:#ff5050;font-family:Liberation Sans,sans-serif;font-size:12px;letter-spacing:0.33px;transform:scaleY(1.15);transform-origin:0 0">100</div>
<div class="t" style="right:182px;top:44px;color:#ff5050;font-size:13px"><span style="display:inline-block;width:14px;text-align:center">加</span><span style="display:inline-block;width:14px;text-align:center">權</span><span style="display:inline-block;width:14px;text-align:center">指</span><span style="display:inline-block;width:14px;text-align:center">數</span></div>
<div class="t" style="right:127px;top:43px;color:#ff5050;font-family:Liberation Sans,sans-serif;font-size:12px;letter-spacing:0.33px;transform:scaleY(1.15);transform-origin:0 0">6320.90</div>
<div class="t" style="right:70px;top:43px;color:#ff5050;font-family:Liberation Sans,sans-serif;font-size:12px;letter-spacing:0.33px;transform:scaleY(1.15);transform-origin:0 0">5961</div>
<div class="t" style="right:246px;top:57px;color:#00ffff;font-family:Liberation Sans,sans-serif;font-size:12px;letter-spacing:0.33px;transform:scaleY(1.15);transform-origin:0 0">110</div>
<div class="t" style="right:182px;top:58px;color:#00ffff;font-size:13px"><span style="display:inline-block;width:14px;text-align:center">不</span><span style="display:inline-block;width:14px;text-align:center">含</span><span style="display:inline-block;width:14px;text-align:center">金</span><span style="display:inline-block;width:14px;text-align:center">電</span></div>
<div class="t" style="right:127px;top:57px;color:#00ffff;font-family:Liberation Sans,sans-serif;font-size:12px;letter-spacing:0.33px;transform:scaleY(1.15);transform-origin:0 0">6126.48</div>
<div class="t" style="right:70px;top:57px;color:#00ffff;font-family:Liberation Sans,sans-serif;font-size:12px;letter-spacing:0.33px;transform:scaleY(1.15);transform-origin:0 0">2108</div>
<div class="t" style="right:246px;top:71px;color:#00ffff;font-family:Liberation Sans,sans-serif;font-size:12px;letter-spacing:0.33px;transform:scaleY(1.15);transform-origin:0 0">217</div>
<div class="t" style="right:182px;top:72px;color:#00ffff;font-size:13px"><span style="display:inline-block;width:14px;text-align:center">金</span><span style="display:inline-block;width:7px"></span><span style="display:inline-block;width:14px;text-align:center">融</span><span style="display:inline-block;width:7px"></span><span style="display:inline-block;width:14px;text-align:center">類</span></div>
<div class="t" style="right:127px;top:71px;color:#00ffff;font-family:Liberation Sans,sans-serif;font-size:12px;letter-spacing:0.33px;transform:scaleY(1.15);transform-origin:0 0">981.32</div>
<div class="t" style="right:70px;top:71px;color:#00ffff;font-family:Liberation Sans,sans-serif;font-size:12px;letter-spacing:0.33px;transform:scaleY(1.15);transform-origin:0 0">646</div>
<div class="t" style="right:246px;top:85px;color:#ff5050;font-family:Liberation Sans,sans-serif;font-size:12px;letter-spacing:0.33px;transform:scaleY(1.15);transform-origin:0 0">213</div>
<div class="t" style="right:182px;top:86px;color:#ff5050;font-size:13px"><span style="display:inline-block;width:14px;text-align:center">電</span><span style="display:inline-block;width:7px"></span><span style="display:inline-block;width:14px;text-align:center">子</span><span style="display:inline-block;width:7px"></span><span style="display:inline-block;width:14px;text-align:center">類</span></div>
<div class="t" style="right:127px;top:85px;color:#ff5050;font-family:Liberation Sans,sans-serif;font-size:12px;letter-spacing:0.33px;transform:scaleY(1.15);transform-origin:0 0">264.57</div>
<div class="t" style="right:70px;top:85px;color:#ff5050;font-family:Liberation Sans,sans-serif;font-size:12px;letter-spacing:0.33px;transform:scaleY(1.15);transform-origin:0 0">3207</div>
<div class="t" style="right:246px;top:99px;color:#00ffff;font-family:Liberation Sans,sans-serif;font-size:12px;letter-spacing:0.33px;transform:scaleY(1.15);transform-origin:0 0">317</div>
<div class="t" style="right:182px;top:100px;color:#00ffff;font-size:13px"><span style="display:inline-block;width:14px;text-align:center">金</span><span style="display:inline-block;width:14px;text-align:center">融</span><span style="display:inline-block;width:14px;text-align:center">指</span><span style="display:inline-block;width:14px;text-align:center">數</span></div>
<div class="t" style="right:127px;top:99px;color:#00ffff;font-family:Liberation Sans,sans-serif;font-size:12px;letter-spacing:0.33px;transform:scaleY(1.15);transform-origin:0 0">981.32</div>
<div class="t" style="right:70px;top:99px;color:#00ffff;font-family:Liberation Sans,sans-serif;font-size:12px;letter-spacing:0.33px;transform:scaleY(1.15);transform-origin:0 0">646</div>
<div class="t" style="right:246px;top:113px;color:#ff5050;font-family:Liberation Sans,sans-serif;font-size:12px;letter-spacing:0.33px;transform:scaleY(1.15);transform-origin:0 0">318</div>
<div class="t" style="right:182px;top:114px;color:#ff5050;font-size:13px"><span style="display:inline-block;width:14px;text-align:center">櫃</span><span style="display:inline-block;width:14px;text-align:center">電</span><span style="display:inline-block;width:14px;text-align:center">指</span><span style="display:inline-block;width:14px;text-align:center">數</span></div>
<div class="t" style="right:127px;top:113px;color:#ff5050;font-family:Liberation Sans,sans-serif;font-size:12px;letter-spacing:0.33px;transform:scaleY(1.15);transform-origin:0 0">100.20</div>
<div class="t" style="right:70px;top:113px;color:#ff5050;font-family:Liberation Sans,sans-serif;font-size:12px;letter-spacing:0.33px;transform:scaleY(1.15);transform-origin:0 0">500</div>
<div style="position:absolute;right:0;top:0;width:16px;bottom:0;background:repeating-conic-gradient(#d4d0c8 0 25%,#fff 0 50%) 0 0/2px 2px"></div>
<div class="rb" style="position:absolute;right:0;top:0;width:16px;height:14px"></div>
<svg style="position:absolute;right:5px;top:5px" width="7" height="4" viewBox="0 0 7 4"><path d="M0 4h7L3.5 0z" fill="#000"/></svg>
<div class="rb" style="position:absolute;right:0;top:14px;width:16px;height:9px"></div>
<div class="rb" style="position:absolute;right:0;bottom:0;width:16px;height:15px"></div>
<svg style="position:absolute;right:5px;bottom:6px" width="7" height="4" viewBox="0 0 7 4"><path d="M0 0h7L3.5 4z" fill="#000"/></svg>
</div></div>
<div class="t" style="left:601px;top:497px;color:#000;font-size:13px;letter-spacing:1px">當日新低</div>
<div class="t" style="left:662px;top:497px;color:#000;font-size:13px">：</div>
<div class="t" style="left:678px;top:496px;color:#000;font-family:Liberation Sans,sans-serif;font-size:12px;letter-spacing:0.33px;transform:scaleY(1.15);transform-origin:0 0">697</div>
<div class="t" style="left:707px;top:497px;color:#000;font-size:13px">只</div>
<div class="t" style="left:601px;top:636px;color:#000;font-size:13px;letter-spacing:1px">落後大盤</div>
<div class="t" style="left:662px;top:636px;color:#000;font-size:13px">：</div>
<div class="t" style="left:678px;top:635px;color:#000;font-family:Liberation Sans,sans-serif;font-size:12px;letter-spacing:0.33px;transform:scaleY(1.15);transform-origin:0 0">936</div>
<div class="t" style="left:707px;top:636px;color:#000;font-size:13px">只</div>
<div style="position:absolute;left:601px;top:511px;width:295px;height:120px;border-top:1px solid #808080;border-left:1px solid #808080;border-right:1px solid #fff;border-bottom:1px solid #fff;overflow:hidden"><div style="position:absolute;left:0;top:0;right:0;bottom:0;border-top:1px solid #404040;border-left:1px solid #404040;border-right:1px solid #d4d0c8;border-bottom:1px solid #d4d0c8;background:#000;overflow:hidden">
<div class="t" style="right:246px;top:1px;color:#00ffff;font-family:Liberation Sans,sans-serif;font-size:12px;letter-spacing:0.33px;transform:scaleY(1.15);transform-origin:0 0">6195</div>
<div class="t" style="right:182px;top:2px;color:#00ffff;font-size:13px"><span style="display:inline-block;width:14px;text-align:center">旭</span><span style="display:inline-block;width:14px"></span><span style="display:inline-block;width:14px;text-align:center">展</span></div>
<div class="t" style="right:127px;top:1px;color:#00ffff;font-family:Liberation Sans,sans-serif;font-size:12px;letter-spacing:0.33px;transform:scaleY(1.15);transform-origin:0 0">3.83</div>
<div class="t" style="right:63px;top:1px;color:#00ffff;font-family:Liberation Sans,sans-serif;font-size:12px;letter-spacing:0.33px;transform:scaleY(1.15);transform-origin:0 0">3.83%</div>
<div class="t" style="right:246px;top:15px;color:#00ffff;font-family:Liberation Sans,sans-serif;font-size:12px;letter-spacing:0.33px;transform:scaleY(1.15);transform-origin:0 0">1609</div>
<div class="t" style="right:182px;top:16px;color:#00ffff;font-size:13px"><span style="display:inline-block;width:14px;text-align:center">大</span><span style="display:inline-block;width:14px"></span><span style="display:inline-block;width:14px;text-align:center">亞</span></div>
<div class="t" style="right:127px;top:15px;color:#00ffff;font-family:Liberation Sans,sans-serif;font-size:12px;letter-spacing:0.33px;transform:scaleY(1.15);transform-origin:0 0">9.25</div>
<div class="t" style="right:63px;top:15px;color:#00ffff;font-family:Liberation Sans,sans-serif;font-size:12px;letter-spacing:0.33px;transform:scaleY(1.15);transform-origin:0 0">9.25%</div>
<div class="t" style="right:246px;top:29px;color:#00ffff;font-family:Liberation Sans,sans-serif;font-size:12px;letter-spacing:0.33px;transform:scaleY(1.15);transform-origin:0 0">1460</div>
<div class="t" style="right:182px;top:30px;color:#00ffff;font-size:13px"><span style="display:inline-block;width:14px;text-align:center">宏</span><span style="display:inline-block;width:14px"></span><span style="display:inline-block;width:14px;text-align:center">遠</span></div>
<div class="t" style="right:127px;top:29px;color:#00ffff;font-family:Liberation Sans,sans-serif;font-size:12px;letter-spacing:0.33px;transform:scaleY(1.15);transform-origin:0 0">6.48</div>
<div class="t" style="right:63px;top:29px;color:#00ffff;font-family:Liberation Sans,sans-serif;font-size:12px;letter-spacing:0.33px;transform:scaleY(1.15);transform-origin:0 0">6.48%</div>
<div class="t" style="right:246px;top:43px;color:#00ffff;font-family:Liberation Sans,sans-serif;font-size:12px;letter-spacing:0.33px;transform:scaleY(1.15);transform-origin:0 0">6158</div>
<div class="t" style="right:182px;top:44px;color:#00ffff;font-size:13px"><span style="display:inline-block;width:14px;text-align:center">禾</span><span style="display:inline-block;width:14px"></span><span style="display:inline-block;width:14px;text-align:center">昌</span></div>
<div class="t" style="right:127px;top:43px;color:#00ffff;font-family:Liberation Sans,sans-serif;font-size:12px;letter-spacing:0.33px;transform:scaleY(1.15);transform-origin:0 0">65.80</div>
<div class="t" style="right:63px;top:43px;color:#00ffff;font-family:Liberation Sans,sans-serif;font-size:12px;letter-spacing:0.33px;transform:scaleY(1.15);transform-origin:0 0">65.80%</div>
<div class="t" style="right:246px;top:57px;color:#00ffff;font-family:Liberation Sans,sans-serif;font-size:12px;letter-spacing:0.33px;transform:scaleY(1.15);transform-origin:0 0">6226</div>
<div class="t" style="right:182px;top:58px;color:#00ffff;font-size:13px"><span style="display:inline-block;width:14px;text-align:center">光</span><span style="display:inline-block;width:14px"></span><span style="display:inline-block;width:14px;text-align:center">鼎</span></div>
<div class="t" style="right:127px;top:57px;color:#00ffff;font-family:Liberation Sans,sans-serif;font-size:12px;letter-spacing:0.33px;transform:scaleY(1.15);transform-origin:0 0">9.40</div>
<div class="t" style="right:63px;top:57px;color:#00ffff;font-family:Liberation Sans,sans-serif;font-size:12px;letter-spacing:0.33px;transform:scaleY(1.15);transform-origin:0 0">9.40%</div>
<div class="t" style="right:246px;top:71px;color:#00ffff;font-family:Liberation Sans,sans-serif;font-size:12px;letter-spacing:0.33px;transform:scaleY(1.15);transform-origin:0 0">0705</div>
<div class="t" style="right:182px;top:72px;color:#00ffff;font-size:13px"><span style="display:inline-block;width:14px;text-align:center">寶</span><span style="display:inline-block;width:14px;text-align:center">來</span><span style="display:inline-block;width:7px;font-family:Liberation Sans,sans-serif;font-size:12px;transform:scaleY(1.15);vertical-align:top;margin-top:1px">6</span><span style="display:inline-block;width:7px;font-family:Liberation Sans,sans-serif;font-size:12px;transform:scaleY(1.15);vertical-align:top;margin-top:1px">4</span></div>
<div class="t" style="right:127px;top:71px;color:#00ffff;font-family:Liberation Sans,sans-serif;font-size:12px;letter-spacing:0.33px;transform:scaleY(1.15);transform-origin:0 0">0.35</div>
<div class="t" style="right:63px;top:71px;color:#00ffff;font-family:Liberation Sans,sans-serif;font-size:12px;letter-spacing:0.33px;transform:scaleY(1.15);transform-origin:0 0">0.35%</div>
<div class="t" style="right:246px;top:85px;color:#00ffff;font-family:Liberation Sans,sans-serif;font-size:12px;letter-spacing:0.33px;transform:scaleY(1.15);transform-origin:0 0">4906</div>
<div class="t" style="right:182px;top:86px;color:#00ffff;font-size:13px"><span style="display:inline-block;width:14px;text-align:center">正</span><span style="display:inline-block;width:14px"></span><span style="display:inline-block;width:14px;text-align:center">文</span></div>
<div class="t" style="right:127px;top:85px;color:#00ffff;font-family:Liberation Sans,sans-serif;font-size:12px;letter-spacing:0.33px;transform:scaleY(1.15);transform-origin:0 0">54.00</div>
<div class="t" style="right:63px;top:85px;color:#00ffff;font-family:Liberation Sans,sans-serif;font-size:12px;letter-spacing:0.33px;transform:scaleY(1.15);transform-origin:0 0">53.90%</div>
<div class="t" style="right:246px;top:99px;color:#00ffff;font-family:Liberation Sans,sans-serif;font-size:12px;letter-spacing:0.33px;transform:scaleY(1.15);transform-origin:0 0">03016</div>
<div class="t" style="right:182px;top:100px;color:#00ffff;font-size:13px"><span style="display:inline-block;width:14px;text-align:center">建</span><span style="display:inline-block;width:14px;text-align:center">華</span><span style="display:inline-block;width:7px;font-family:Liberation Sans,sans-serif;font-size:12px;transform:scaleY(1.15);vertical-align:top;margin-top:1px">8</span><span style="display:inline-block;width:7px;font-family:Liberation Sans,sans-serif;font-size:12px;transform:scaleY(1.15);vertical-align:top;margin-top:1px">7</span></div>
<div class="t" style="right:127px;top:99px;color:#00ffff;font-family:Liberation Sans,sans-serif;font-size:12px;letter-spacing:0.33px;transform:scaleY(1.15);transform-origin:0 0">0.04</div>
<div class="t" style="right:63px;top:99px;color:#00ffff;font-family:Liberation Sans,sans-serif;font-size:12px;letter-spacing:0.33px;transform:scaleY(1.15);transform-origin:0 0">0.04%</div>
<div class="t" style="right:246px;top:113px;color:#00ffff;font-family:Liberation Sans,sans-serif;font-size:12px;letter-spacing:0.33px;transform:scaleY(1.15);transform-origin:0 0">1234</div>
<div class="t" style="right:182px;top:114px;color:#00ffff;font-size:13px"><span style="display:inline-block;width:14px;text-align:center">大</span><span style="display:inline-block;width:14px"></span><span style="display:inline-block;width:14px;text-align:center">同</span></div>
<div class="t" style="right:127px;top:113px;color:#00ffff;font-family:Liberation Sans,sans-serif;font-size:12px;letter-spacing:0.33px;transform:scaleY(1.15);transform-origin:0 0">1.00</div>
<div class="t" style="right:63px;top:113px;color:#00ffff;font-family:Liberation Sans,sans-serif;font-size:12px;letter-spacing:0.33px;transform:scaleY(1.15);transform-origin:0 0">1.00%</div>
<div style="position:absolute;right:0;top:0;width:16px;bottom:0;background:repeating-conic-gradient(#d4d0c8 0 25%,#fff 0 50%) 0 0/2px 2px"></div>
<div class="rb" style="position:absolute;right:0;top:0;width:16px;height:14px"></div>
<svg style="position:absolute;right:5px;top:5px" width="7" height="4" viewBox="0 0 7 4"><path d="M0 4h7L3.5 0z" fill="#000"/></svg>
<div class="rb" style="position:absolute;right:0;top:14px;width:16px;height:9px"></div>
<div class="rb" style="position:absolute;right:0;bottom:0;width:16px;height:15px"></div>
<svg style="position:absolute;right:5px;bottom:6px" width="7" height="4" viewBox="0 0 7 4"><path d="M0 0h7L3.5 4z" fill="#000"/></svg>
</div></div>
<div style="position:absolute;left:0px;top:649px;width:900px;height:2px;border-top:1px solid #404040;background:#808080"></div></div></body></html>
